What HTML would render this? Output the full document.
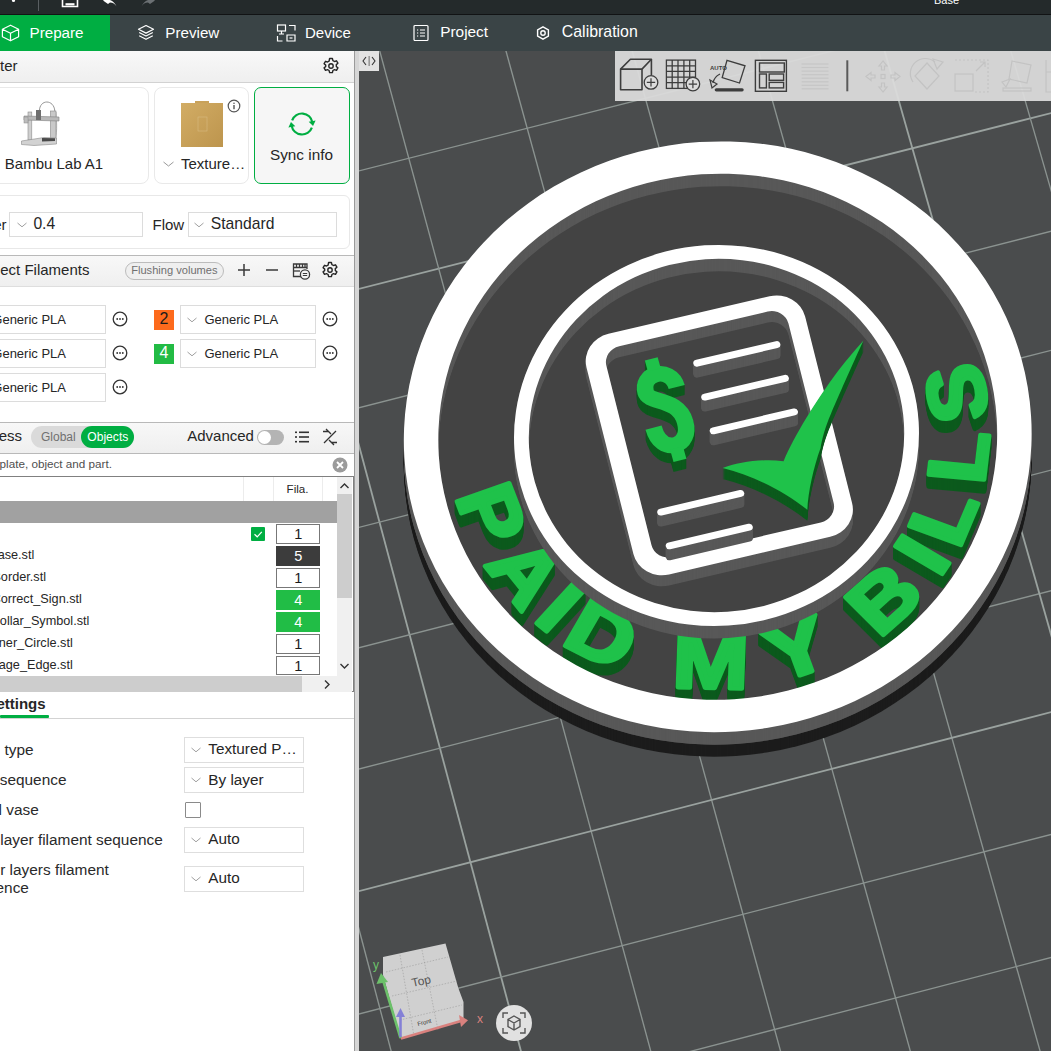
<!DOCTYPE html><html><head><meta charset="utf-8"><style>
html,body{margin:0;padding:0;}
body{width:1051px;height:1051px;overflow:hidden;position:relative;background:#fff;font-family:"Liberation Sans",sans-serif;}
.t{position:absolute;white-space:nowrap;line-height:1;}
.r{position:absolute;box-sizing:border-box;}
</style></head><body><svg style="position:absolute;left:0;top:0" width="1051" height="1051" viewBox="0 0 1051 1051">
<defs><clipPath id="vpc"><rect x="359" y="51" width="692" height="1000"/></clipPath></defs>
<g clip-path="url(#vpc)">
<rect x="359" y="51" width="692" height="1000" fill="#4a4c4d"/>
<line x1="-388.46" y1="8.64" x2="40.15" y2="1725.31" stroke="#9aa29f" stroke-width="1.8"/>
<line x1="-297.36" y1="-129.73" x2="1452.35" y2="-566.68" stroke="#9aa29f" stroke-width="1.8"/>
<line x1="-269.84" y1="-21.09" x2="164.10" y2="1692.58" stroke="#8b9390" stroke-width="1.35"/>
<line x1="-269.84" y1="-21.09" x2="1484.81" y2="-460.77" stroke="#8b9390" stroke-width="1.35"/>
<line x1="-151.43" y1="-50.76" x2="287.83" y2="1659.90" stroke="#8b9390" stroke-width="1.35"/>
<line x1="-242.16" y1="88.23" x2="1517.47" y2="-354.21" stroke="#8b9390" stroke-width="1.35"/>
<line x1="-33.23" y1="-80.38" x2="411.33" y2="1627.29" stroke="#8b9390" stroke-width="1.35"/>
<line x1="-214.31" y1="198.22" x2="1550.33" y2="-247.01" stroke="#8b9390" stroke-width="1.35"/>
<line x1="84.76" y1="-109.94" x2="534.61" y2="1594.73" stroke="#8b9390" stroke-width="1.35"/>
<line x1="-186.28" y1="308.89" x2="1583.39" y2="-139.14" stroke="#8b9390" stroke-width="1.35"/>
<line x1="202.55" y1="-139.46" x2="657.65" y2="1562.24" stroke="#9aa29f" stroke-width="1.8"/>
<line x1="-158.08" y1="420.25" x2="1616.65" y2="-30.62" stroke="#9aa29f" stroke-width="1.8"/>
<line x1="320.14" y1="-168.92" x2="780.48" y2="1529.80" stroke="#8b9390" stroke-width="1.35"/>
<line x1="-129.71" y1="532.31" x2="1650.12" y2="78.57" stroke="#8b9390" stroke-width="1.35"/>
<line x1="437.52" y1="-198.34" x2="903.08" y2="1497.43" stroke="#8b9390" stroke-width="1.35"/>
<line x1="-101.15" y1="645.07" x2="1683.80" y2="188.44" stroke="#8b9390" stroke-width="1.35"/>
<line x1="554.69" y1="-227.70" x2="1025.46" y2="1465.11" stroke="#8b9390" stroke-width="1.35"/>
<line x1="-72.42" y1="758.53" x2="1717.68" y2="298.99" stroke="#8b9390" stroke-width="1.35"/>
<line x1="671.67" y1="-257.01" x2="1147.61" y2="1432.85" stroke="#8b9390" stroke-width="1.35"/>
<line x1="-43.51" y1="872.71" x2="1751.77" y2="410.23" stroke="#8b9390" stroke-width="1.35"/>
<line x1="788.43" y1="-286.27" x2="1269.54" y2="1400.65" stroke="#9aa29f" stroke-width="1.8"/>
<line x1="-14.41" y1="987.62" x2="1786.08" y2="522.16" stroke="#9aa29f" stroke-width="1.8"/>
<line x1="905.00" y1="-315.48" x2="1391.25" y2="1368.51" stroke="#8b9390" stroke-width="1.35"/>
<line x1="14.87" y1="1103.25" x2="1820.60" y2="634.79" stroke="#8b9390" stroke-width="1.35"/>
<line x1="1021.37" y1="-344.64" x2="1512.74" y2="1336.42" stroke="#8b9390" stroke-width="1.35"/>
<line x1="44.34" y1="1219.61" x2="1855.34" y2="748.12" stroke="#8b9390" stroke-width="1.35"/>
<line x1="1137.53" y1="-373.75" x2="1634.01" y2="1304.40" stroke="#8b9390" stroke-width="1.35"/>
<line x1="73.99" y1="1336.72" x2="1890.29" y2="862.17" stroke="#8b9390" stroke-width="1.35"/>
<line x1="1253.49" y1="-402.81" x2="1755.06" y2="1272.43" stroke="#8b9390" stroke-width="1.35"/>
<line x1="103.84" y1="1454.58" x2="1925.47" y2="976.94" stroke="#8b9390" stroke-width="1.35"/>
<line x1="1369.25" y1="-431.81" x2="1875.88" y2="1240.52" stroke="#9aa29f" stroke-width="1.8"/>
<line x1="133.87" y1="1573.20" x2="1960.87" y2="1092.44" stroke="#9aa29f" stroke-width="1.8"/>
<g transform="translate(-1,2.5)"><g transform="translate(0,24.50)"><g transform="matrix(1.19121,-0.30480,0.31019,1.11767,718.725,434.294)"><circle cx="0" cy="0" r="255" fill="#1c1c1c"/></g></g>
<g transform="translate(0,23.50)"><g transform="matrix(1.19121,-0.30480,0.31019,1.11767,718.725,434.294)"><circle cx="0" cy="0" r="255" fill="#1c1c1c"/></g></g>
<g transform="translate(0,22.50)"><g transform="matrix(1.19121,-0.30480,0.31019,1.11767,718.725,434.294)"><circle cx="0" cy="0" r="255" fill="#1c1c1c"/></g></g>
<g transform="translate(0,21.50)"><g transform="matrix(1.19121,-0.30480,0.31019,1.11767,718.725,434.294)"><circle cx="0" cy="0" r="255" fill="#1c1c1c"/></g></g>
<g transform="translate(0,20.50)"><g transform="matrix(1.19121,-0.30480,0.31019,1.11767,718.725,434.294)"><circle cx="0" cy="0" r="255" fill="#1c1c1c"/></g></g>
<g transform="translate(0,19.50)"><g transform="matrix(1.19121,-0.30480,0.31019,1.11767,718.725,434.294)"><circle cx="0" cy="0" r="255" fill="#1c1c1c"/></g></g>
<g transform="translate(0,18.50)"><g transform="matrix(1.19121,-0.30480,0.31019,1.11767,718.725,434.294)"><circle cx="0" cy="0" r="255" fill="#1c1c1c"/></g></g>
<g transform="translate(0,17.50)"><g transform="matrix(1.19121,-0.30480,0.31019,1.11767,718.725,434.294)"><circle cx="0" cy="0" r="255" fill="#1c1c1c"/></g></g>
<g transform="translate(0,16.50)"><g transform="matrix(1.19121,-0.30480,0.31019,1.11767,718.725,434.294)"><circle cx="0" cy="0" r="255" fill="#1c1c1c"/></g></g>
<g transform="translate(0,15.50)"><g transform="matrix(1.19121,-0.30480,0.31019,1.11767,718.725,434.294)"><circle cx="0" cy="0" r="255" fill="#1c1c1c"/></g></g>
<g transform="translate(0,14.50)"><g transform="matrix(1.19121,-0.30480,0.31019,1.11767,718.725,434.294)"><circle cx="0" cy="0" r="255" fill="#1c1c1c"/></g></g>
<g transform="translate(0,13.50)"><g transform="matrix(1.19121,-0.30480,0.31019,1.11767,718.725,434.294)"><circle cx="0" cy="0" r="255" fill="#1c1c1c"/></g></g>
<g transform="translate(0,12.50)"><g transform="matrix(1.19121,-0.30480,0.31019,1.11767,718.725,434.294)"><circle cx="0" cy="0" r="255" fill="#434343"/></g></g></g>
<g transform="translate(0,12.00)"><g transform="matrix(1.19121,-0.30480,0.31019,1.11767,718.725,434.294)"><g fill="#0c5a1d" stroke="#0c5a1d" stroke-width="3.5" stroke-linejoin="round"><text transform="translate(-218.10,19.85) rotate(84.80) scale(1.120,1)" font-family="Liberation Sans" font-weight="bold" font-size="66" text-anchor="middle">P</text><text transform="translate(-202.62,83.10) rotate(67.70) scale(1.120,1)" font-family="Liberation Sans" font-weight="bold" font-size="66" text-anchor="middle">A</text><text transform="translate(-180.92,123.41) rotate(55.70) scale(1.120,1)" font-family="Liberation Sans" font-weight="bold" font-size="66" text-anchor="middle">I</text><text transform="translate(-150.75,158.86) rotate(43.50) scale(1.120,1)" font-family="Liberation Sans" font-weight="bold" font-size="66" text-anchor="middle">D</text><text transform="translate(-62.20,209.98) rotate(16.50) scale(1.120,1)" font-family="Liberation Sans" font-weight="bold" font-size="66" text-anchor="middle">M</text><text transform="translate(16.42,218.38) rotate(-4.30) scale(1.120,1)" font-family="Liberation Sans" font-weight="bold" font-size="66" text-anchor="middle">Y</text><text transform="translate(104.50,192.46) rotate(-28.50) scale(1.120,1)" font-family="Liberation Sans" font-weight="bold" font-size="66" text-anchor="middle">B</text><text transform="translate(148.80,160.69) rotate(-42.80) scale(1.120,1)" font-family="Liberation Sans" font-weight="bold" font-size="66" text-anchor="middle">I</text><text transform="translate(176.27,129.96) rotate(-53.60) scale(1.120,1)" font-family="Liberation Sans" font-weight="bold" font-size="66" text-anchor="middle">L</text><text transform="translate(204.59,78.13) rotate(-69.10) scale(1.120,1)" font-family="Liberation Sans" font-weight="bold" font-size="66" text-anchor="middle">L</text><text transform="translate(218.20,18.71) rotate(-85.10) scale(1.120,1)" font-family="Liberation Sans" font-weight="bold" font-size="66" text-anchor="middle">S</text></g></g></g>
<g transform="translate(0,11.00)"><g transform="matrix(1.19121,-0.30480,0.31019,1.11767,718.725,434.294)"><g fill="#0c5a1d" stroke="#0c5a1d" stroke-width="3.5" stroke-linejoin="round"><text transform="translate(-218.10,19.85) rotate(84.80) scale(1.120,1)" font-family="Liberation Sans" font-weight="bold" font-size="66" text-anchor="middle">P</text><text transform="translate(-202.62,83.10) rotate(67.70) scale(1.120,1)" font-family="Liberation Sans" font-weight="bold" font-size="66" text-anchor="middle">A</text><text transform="translate(-180.92,123.41) rotate(55.70) scale(1.120,1)" font-family="Liberation Sans" font-weight="bold" font-size="66" text-anchor="middle">I</text><text transform="translate(-150.75,158.86) rotate(43.50) scale(1.120,1)" font-family="Liberation Sans" font-weight="bold" font-size="66" text-anchor="middle">D</text><text transform="translate(-62.20,209.98) rotate(16.50) scale(1.120,1)" font-family="Liberation Sans" font-weight="bold" font-size="66" text-anchor="middle">M</text><text transform="translate(16.42,218.38) rotate(-4.30) scale(1.120,1)" font-family="Liberation Sans" font-weight="bold" font-size="66" text-anchor="middle">Y</text><text transform="translate(104.50,192.46) rotate(-28.50) scale(1.120,1)" font-family="Liberation Sans" font-weight="bold" font-size="66" text-anchor="middle">B</text><text transform="translate(148.80,160.69) rotate(-42.80) scale(1.120,1)" font-family="Liberation Sans" font-weight="bold" font-size="66" text-anchor="middle">I</text><text transform="translate(176.27,129.96) rotate(-53.60) scale(1.120,1)" font-family="Liberation Sans" font-weight="bold" font-size="66" text-anchor="middle">L</text><text transform="translate(204.59,78.13) rotate(-69.10) scale(1.120,1)" font-family="Liberation Sans" font-weight="bold" font-size="66" text-anchor="middle">L</text><text transform="translate(218.20,18.71) rotate(-85.10) scale(1.120,1)" font-family="Liberation Sans" font-weight="bold" font-size="66" text-anchor="middle">S</text></g></g></g>
<g transform="translate(0,10.00)"><g transform="matrix(1.19121,-0.30480,0.31019,1.11767,718.725,434.294)"><g fill="#0c5a1d" stroke="#0c5a1d" stroke-width="3.5" stroke-linejoin="round"><text transform="translate(-218.10,19.85) rotate(84.80) scale(1.120,1)" font-family="Liberation Sans" font-weight="bold" font-size="66" text-anchor="middle">P</text><text transform="translate(-202.62,83.10) rotate(67.70) scale(1.120,1)" font-family="Liberation Sans" font-weight="bold" font-size="66" text-anchor="middle">A</text><text transform="translate(-180.92,123.41) rotate(55.70) scale(1.120,1)" font-family="Liberation Sans" font-weight="bold" font-size="66" text-anchor="middle">I</text><text transform="translate(-150.75,158.86) rotate(43.50) scale(1.120,1)" font-family="Liberation Sans" font-weight="bold" font-size="66" text-anchor="middle">D</text><text transform="translate(-62.20,209.98) rotate(16.50) scale(1.120,1)" font-family="Liberation Sans" font-weight="bold" font-size="66" text-anchor="middle">M</text><text transform="translate(16.42,218.38) rotate(-4.30) scale(1.120,1)" font-family="Liberation Sans" font-weight="bold" font-size="66" text-anchor="middle">Y</text><text transform="translate(104.50,192.46) rotate(-28.50) scale(1.120,1)" font-family="Liberation Sans" font-weight="bold" font-size="66" text-anchor="middle">B</text><text transform="translate(148.80,160.69) rotate(-42.80) scale(1.120,1)" font-family="Liberation Sans" font-weight="bold" font-size="66" text-anchor="middle">I</text><text transform="translate(176.27,129.96) rotate(-53.60) scale(1.120,1)" font-family="Liberation Sans" font-weight="bold" font-size="66" text-anchor="middle">L</text><text transform="translate(204.59,78.13) rotate(-69.10) scale(1.120,1)" font-family="Liberation Sans" font-weight="bold" font-size="66" text-anchor="middle">L</text><text transform="translate(218.20,18.71) rotate(-85.10) scale(1.120,1)" font-family="Liberation Sans" font-weight="bold" font-size="66" text-anchor="middle">S</text></g></g></g>
<g transform="translate(0,9.00)"><g transform="matrix(1.19121,-0.30480,0.31019,1.11767,718.725,434.294)"><g fill="#0c5a1d" stroke="#0c5a1d" stroke-width="3.5" stroke-linejoin="round"><text transform="translate(-218.10,19.85) rotate(84.80) scale(1.120,1)" font-family="Liberation Sans" font-weight="bold" font-size="66" text-anchor="middle">P</text><text transform="translate(-202.62,83.10) rotate(67.70) scale(1.120,1)" font-family="Liberation Sans" font-weight="bold" font-size="66" text-anchor="middle">A</text><text transform="translate(-180.92,123.41) rotate(55.70) scale(1.120,1)" font-family="Liberation Sans" font-weight="bold" font-size="66" text-anchor="middle">I</text><text transform="translate(-150.75,158.86) rotate(43.50) scale(1.120,1)" font-family="Liberation Sans" font-weight="bold" font-size="66" text-anchor="middle">D</text><text transform="translate(-62.20,209.98) rotate(16.50) scale(1.120,1)" font-family="Liberation Sans" font-weight="bold" font-size="66" text-anchor="middle">M</text><text transform="translate(16.42,218.38) rotate(-4.30) scale(1.120,1)" font-family="Liberation Sans" font-weight="bold" font-size="66" text-anchor="middle">Y</text><text transform="translate(104.50,192.46) rotate(-28.50) scale(1.120,1)" font-family="Liberation Sans" font-weight="bold" font-size="66" text-anchor="middle">B</text><text transform="translate(148.80,160.69) rotate(-42.80) scale(1.120,1)" font-family="Liberation Sans" font-weight="bold" font-size="66" text-anchor="middle">I</text><text transform="translate(176.27,129.96) rotate(-53.60) scale(1.120,1)" font-family="Liberation Sans" font-weight="bold" font-size="66" text-anchor="middle">L</text><text transform="translate(204.59,78.13) rotate(-69.10) scale(1.120,1)" font-family="Liberation Sans" font-weight="bold" font-size="66" text-anchor="middle">L</text><text transform="translate(218.20,18.71) rotate(-85.10) scale(1.120,1)" font-family="Liberation Sans" font-weight="bold" font-size="66" text-anchor="middle">S</text></g></g></g>
<g transform="translate(0,8.00)"><g transform="matrix(1.19121,-0.30480,0.31019,1.11767,718.725,434.294)"><g fill="#0c5a1d" stroke="#0c5a1d" stroke-width="3.5" stroke-linejoin="round"><text transform="translate(-218.10,19.85) rotate(84.80) scale(1.120,1)" font-family="Liberation Sans" font-weight="bold" font-size="66" text-anchor="middle">P</text><text transform="translate(-202.62,83.10) rotate(67.70) scale(1.120,1)" font-family="Liberation Sans" font-weight="bold" font-size="66" text-anchor="middle">A</text><text transform="translate(-180.92,123.41) rotate(55.70) scale(1.120,1)" font-family="Liberation Sans" font-weight="bold" font-size="66" text-anchor="middle">I</text><text transform="translate(-150.75,158.86) rotate(43.50) scale(1.120,1)" font-family="Liberation Sans" font-weight="bold" font-size="66" text-anchor="middle">D</text><text transform="translate(-62.20,209.98) rotate(16.50) scale(1.120,1)" font-family="Liberation Sans" font-weight="bold" font-size="66" text-anchor="middle">M</text><text transform="translate(16.42,218.38) rotate(-4.30) scale(1.120,1)" font-family="Liberation Sans" font-weight="bold" font-size="66" text-anchor="middle">Y</text><text transform="translate(104.50,192.46) rotate(-28.50) scale(1.120,1)" font-family="Liberation Sans" font-weight="bold" font-size="66" text-anchor="middle">B</text><text transform="translate(148.80,160.69) rotate(-42.80) scale(1.120,1)" font-family="Liberation Sans" font-weight="bold" font-size="66" text-anchor="middle">I</text><text transform="translate(176.27,129.96) rotate(-53.60) scale(1.120,1)" font-family="Liberation Sans" font-weight="bold" font-size="66" text-anchor="middle">L</text><text transform="translate(204.59,78.13) rotate(-69.10) scale(1.120,1)" font-family="Liberation Sans" font-weight="bold" font-size="66" text-anchor="middle">L</text><text transform="translate(218.20,18.71) rotate(-85.10) scale(1.120,1)" font-family="Liberation Sans" font-weight="bold" font-size="66" text-anchor="middle">S</text></g></g></g>
<g transform="translate(0,7.00)"><g transform="matrix(1.19121,-0.30480,0.31019,1.11767,718.725,434.294)"><g fill="#0c5a1d" stroke="#0c5a1d" stroke-width="3.5" stroke-linejoin="round"><text transform="translate(-218.10,19.85) rotate(84.80) scale(1.120,1)" font-family="Liberation Sans" font-weight="bold" font-size="66" text-anchor="middle">P</text><text transform="translate(-202.62,83.10) rotate(67.70) scale(1.120,1)" font-family="Liberation Sans" font-weight="bold" font-size="66" text-anchor="middle">A</text><text transform="translate(-180.92,123.41) rotate(55.70) scale(1.120,1)" font-family="Liberation Sans" font-weight="bold" font-size="66" text-anchor="middle">I</text><text transform="translate(-150.75,158.86) rotate(43.50) scale(1.120,1)" font-family="Liberation Sans" font-weight="bold" font-size="66" text-anchor="middle">D</text><text transform="translate(-62.20,209.98) rotate(16.50) scale(1.120,1)" font-family="Liberation Sans" font-weight="bold" font-size="66" text-anchor="middle">M</text><text transform="translate(16.42,218.38) rotate(-4.30) scale(1.120,1)" font-family="Liberation Sans" font-weight="bold" font-size="66" text-anchor="middle">Y</text><text transform="translate(104.50,192.46) rotate(-28.50) scale(1.120,1)" font-family="Liberation Sans" font-weight="bold" font-size="66" text-anchor="middle">B</text><text transform="translate(148.80,160.69) rotate(-42.80) scale(1.120,1)" font-family="Liberation Sans" font-weight="bold" font-size="66" text-anchor="middle">I</text><text transform="translate(176.27,129.96) rotate(-53.60) scale(1.120,1)" font-family="Liberation Sans" font-weight="bold" font-size="66" text-anchor="middle">L</text><text transform="translate(204.59,78.13) rotate(-69.10) scale(1.120,1)" font-family="Liberation Sans" font-weight="bold" font-size="66" text-anchor="middle">L</text><text transform="translate(218.20,18.71) rotate(-85.10) scale(1.120,1)" font-family="Liberation Sans" font-weight="bold" font-size="66" text-anchor="middle">S</text></g></g></g>
<g transform="translate(0,6.00)"><g transform="matrix(1.19121,-0.30480,0.31019,1.11767,718.725,434.294)"><g fill="#0c5a1d" stroke="#0c5a1d" stroke-width="3.5" stroke-linejoin="round"><text transform="translate(-218.10,19.85) rotate(84.80) scale(1.120,1)" font-family="Liberation Sans" font-weight="bold" font-size="66" text-anchor="middle">P</text><text transform="translate(-202.62,83.10) rotate(67.70) scale(1.120,1)" font-family="Liberation Sans" font-weight="bold" font-size="66" text-anchor="middle">A</text><text transform="translate(-180.92,123.41) rotate(55.70) scale(1.120,1)" font-family="Liberation Sans" font-weight="bold" font-size="66" text-anchor="middle">I</text><text transform="translate(-150.75,158.86) rotate(43.50) scale(1.120,1)" font-family="Liberation Sans" font-weight="bold" font-size="66" text-anchor="middle">D</text><text transform="translate(-62.20,209.98) rotate(16.50) scale(1.120,1)" font-family="Liberation Sans" font-weight="bold" font-size="66" text-anchor="middle">M</text><text transform="translate(16.42,218.38) rotate(-4.30) scale(1.120,1)" font-family="Liberation Sans" font-weight="bold" font-size="66" text-anchor="middle">Y</text><text transform="translate(104.50,192.46) rotate(-28.50) scale(1.120,1)" font-family="Liberation Sans" font-weight="bold" font-size="66" text-anchor="middle">B</text><text transform="translate(148.80,160.69) rotate(-42.80) scale(1.120,1)" font-family="Liberation Sans" font-weight="bold" font-size="66" text-anchor="middle">I</text><text transform="translate(176.27,129.96) rotate(-53.60) scale(1.120,1)" font-family="Liberation Sans" font-weight="bold" font-size="66" text-anchor="middle">L</text><text transform="translate(204.59,78.13) rotate(-69.10) scale(1.120,1)" font-family="Liberation Sans" font-weight="bold" font-size="66" text-anchor="middle">L</text><text transform="translate(218.20,18.71) rotate(-85.10) scale(1.120,1)" font-family="Liberation Sans" font-weight="bold" font-size="66" text-anchor="middle">S</text></g></g></g>
<g transform="translate(0,5.00)"><g transform="matrix(1.19121,-0.30480,0.31019,1.11767,718.725,434.294)"><g fill="#0c5a1d" stroke="#0c5a1d" stroke-width="3.5" stroke-linejoin="round"><text transform="translate(-218.10,19.85) rotate(84.80) scale(1.120,1)" font-family="Liberation Sans" font-weight="bold" font-size="66" text-anchor="middle">P</text><text transform="translate(-202.62,83.10) rotate(67.70) scale(1.120,1)" font-family="Liberation Sans" font-weight="bold" font-size="66" text-anchor="middle">A</text><text transform="translate(-180.92,123.41) rotate(55.70) scale(1.120,1)" font-family="Liberation Sans" font-weight="bold" font-size="66" text-anchor="middle">I</text><text transform="translate(-150.75,158.86) rotate(43.50) scale(1.120,1)" font-family="Liberation Sans" font-weight="bold" font-size="66" text-anchor="middle">D</text><text transform="translate(-62.20,209.98) rotate(16.50) scale(1.120,1)" font-family="Liberation Sans" font-weight="bold" font-size="66" text-anchor="middle">M</text><text transform="translate(16.42,218.38) rotate(-4.30) scale(1.120,1)" font-family="Liberation Sans" font-weight="bold" font-size="66" text-anchor="middle">Y</text><text transform="translate(104.50,192.46) rotate(-28.50) scale(1.120,1)" font-family="Liberation Sans" font-weight="bold" font-size="66" text-anchor="middle">B</text><text transform="translate(148.80,160.69) rotate(-42.80) scale(1.120,1)" font-family="Liberation Sans" font-weight="bold" font-size="66" text-anchor="middle">I</text><text transform="translate(176.27,129.96) rotate(-53.60) scale(1.120,1)" font-family="Liberation Sans" font-weight="bold" font-size="66" text-anchor="middle">L</text><text transform="translate(204.59,78.13) rotate(-69.10) scale(1.120,1)" font-family="Liberation Sans" font-weight="bold" font-size="66" text-anchor="middle">L</text><text transform="translate(218.20,18.71) rotate(-85.10) scale(1.120,1)" font-family="Liberation Sans" font-weight="bold" font-size="66" text-anchor="middle">S</text></g></g></g>
<g transform="translate(0,4.00)"><g transform="matrix(1.19121,-0.30480,0.31019,1.11767,718.725,434.294)"><g fill="#0c5a1d" stroke="#0c5a1d" stroke-width="3.5" stroke-linejoin="round"><text transform="translate(-218.10,19.85) rotate(84.80) scale(1.120,1)" font-family="Liberation Sans" font-weight="bold" font-size="66" text-anchor="middle">P</text><text transform="translate(-202.62,83.10) rotate(67.70) scale(1.120,1)" font-family="Liberation Sans" font-weight="bold" font-size="66" text-anchor="middle">A</text><text transform="translate(-180.92,123.41) rotate(55.70) scale(1.120,1)" font-family="Liberation Sans" font-weight="bold" font-size="66" text-anchor="middle">I</text><text transform="translate(-150.75,158.86) rotate(43.50) scale(1.120,1)" font-family="Liberation Sans" font-weight="bold" font-size="66" text-anchor="middle">D</text><text transform="translate(-62.20,209.98) rotate(16.50) scale(1.120,1)" font-family="Liberation Sans" font-weight="bold" font-size="66" text-anchor="middle">M</text><text transform="translate(16.42,218.38) rotate(-4.30) scale(1.120,1)" font-family="Liberation Sans" font-weight="bold" font-size="66" text-anchor="middle">Y</text><text transform="translate(104.50,192.46) rotate(-28.50) scale(1.120,1)" font-family="Liberation Sans" font-weight="bold" font-size="66" text-anchor="middle">B</text><text transform="translate(148.80,160.69) rotate(-42.80) scale(1.120,1)" font-family="Liberation Sans" font-weight="bold" font-size="66" text-anchor="middle">I</text><text transform="translate(176.27,129.96) rotate(-53.60) scale(1.120,1)" font-family="Liberation Sans" font-weight="bold" font-size="66" text-anchor="middle">L</text><text transform="translate(204.59,78.13) rotate(-69.10) scale(1.120,1)" font-family="Liberation Sans" font-weight="bold" font-size="66" text-anchor="middle">L</text><text transform="translate(218.20,18.71) rotate(-85.10) scale(1.120,1)" font-family="Liberation Sans" font-weight="bold" font-size="66" text-anchor="middle">S</text></g></g></g>
<g transform="translate(0,3.00)"><g transform="matrix(1.19121,-0.30480,0.31019,1.11767,718.725,434.294)"><g fill="#0c5a1d" stroke="#0c5a1d" stroke-width="3.5" stroke-linejoin="round"><text transform="translate(-218.10,19.85) rotate(84.80) scale(1.120,1)" font-family="Liberation Sans" font-weight="bold" font-size="66" text-anchor="middle">P</text><text transform="translate(-202.62,83.10) rotate(67.70) scale(1.120,1)" font-family="Liberation Sans" font-weight="bold" font-size="66" text-anchor="middle">A</text><text transform="translate(-180.92,123.41) rotate(55.70) scale(1.120,1)" font-family="Liberation Sans" font-weight="bold" font-size="66" text-anchor="middle">I</text><text transform="translate(-150.75,158.86) rotate(43.50) scale(1.120,1)" font-family="Liberation Sans" font-weight="bold" font-size="66" text-anchor="middle">D</text><text transform="translate(-62.20,209.98) rotate(16.50) scale(1.120,1)" font-family="Liberation Sans" font-weight="bold" font-size="66" text-anchor="middle">M</text><text transform="translate(16.42,218.38) rotate(-4.30) scale(1.120,1)" font-family="Liberation Sans" font-weight="bold" font-size="66" text-anchor="middle">Y</text><text transform="translate(104.50,192.46) rotate(-28.50) scale(1.120,1)" font-family="Liberation Sans" font-weight="bold" font-size="66" text-anchor="middle">B</text><text transform="translate(148.80,160.69) rotate(-42.80) scale(1.120,1)" font-family="Liberation Sans" font-weight="bold" font-size="66" text-anchor="middle">I</text><text transform="translate(176.27,129.96) rotate(-53.60) scale(1.120,1)" font-family="Liberation Sans" font-weight="bold" font-size="66" text-anchor="middle">L</text><text transform="translate(204.59,78.13) rotate(-69.10) scale(1.120,1)" font-family="Liberation Sans" font-weight="bold" font-size="66" text-anchor="middle">L</text><text transform="translate(218.20,18.71) rotate(-85.10) scale(1.120,1)" font-family="Liberation Sans" font-weight="bold" font-size="66" text-anchor="middle">S</text></g></g></g>
<g transform="translate(0,2.00)"><g transform="matrix(1.19121,-0.30480,0.31019,1.11767,718.725,434.294)"><g fill="#0c5a1d" stroke="#0c5a1d" stroke-width="3.5" stroke-linejoin="round"><text transform="translate(-218.10,19.85) rotate(84.80) scale(1.120,1)" font-family="Liberation Sans" font-weight="bold" font-size="66" text-anchor="middle">P</text><text transform="translate(-202.62,83.10) rotate(67.70) scale(1.120,1)" font-family="Liberation Sans" font-weight="bold" font-size="66" text-anchor="middle">A</text><text transform="translate(-180.92,123.41) rotate(55.70) scale(1.120,1)" font-family="Liberation Sans" font-weight="bold" font-size="66" text-anchor="middle">I</text><text transform="translate(-150.75,158.86) rotate(43.50) scale(1.120,1)" font-family="Liberation Sans" font-weight="bold" font-size="66" text-anchor="middle">D</text><text transform="translate(-62.20,209.98) rotate(16.50) scale(1.120,1)" font-family="Liberation Sans" font-weight="bold" font-size="66" text-anchor="middle">M</text><text transform="translate(16.42,218.38) rotate(-4.30) scale(1.120,1)" font-family="Liberation Sans" font-weight="bold" font-size="66" text-anchor="middle">Y</text><text transform="translate(104.50,192.46) rotate(-28.50) scale(1.120,1)" font-family="Liberation Sans" font-weight="bold" font-size="66" text-anchor="middle">B</text><text transform="translate(148.80,160.69) rotate(-42.80) scale(1.120,1)" font-family="Liberation Sans" font-weight="bold" font-size="66" text-anchor="middle">I</text><text transform="translate(176.27,129.96) rotate(-53.60) scale(1.120,1)" font-family="Liberation Sans" font-weight="bold" font-size="66" text-anchor="middle">L</text><text transform="translate(204.59,78.13) rotate(-69.10) scale(1.120,1)" font-family="Liberation Sans" font-weight="bold" font-size="66" text-anchor="middle">L</text><text transform="translate(218.20,18.71) rotate(-85.10) scale(1.120,1)" font-family="Liberation Sans" font-weight="bold" font-size="66" text-anchor="middle">S</text></g></g></g>
<g transform="translate(0,1.00)"><g transform="matrix(1.19121,-0.30480,0.31019,1.11767,718.725,434.294)"><g fill="#0c5a1d" stroke="#0c5a1d" stroke-width="3.5" stroke-linejoin="round"><text transform="translate(-218.10,19.85) rotate(84.80) scale(1.120,1)" font-family="Liberation Sans" font-weight="bold" font-size="66" text-anchor="middle">P</text><text transform="translate(-202.62,83.10) rotate(67.70) scale(1.120,1)" font-family="Liberation Sans" font-weight="bold" font-size="66" text-anchor="middle">A</text><text transform="translate(-180.92,123.41) rotate(55.70) scale(1.120,1)" font-family="Liberation Sans" font-weight="bold" font-size="66" text-anchor="middle">I</text><text transform="translate(-150.75,158.86) rotate(43.50) scale(1.120,1)" font-family="Liberation Sans" font-weight="bold" font-size="66" text-anchor="middle">D</text><text transform="translate(-62.20,209.98) rotate(16.50) scale(1.120,1)" font-family="Liberation Sans" font-weight="bold" font-size="66" text-anchor="middle">M</text><text transform="translate(16.42,218.38) rotate(-4.30) scale(1.120,1)" font-family="Liberation Sans" font-weight="bold" font-size="66" text-anchor="middle">Y</text><text transform="translate(104.50,192.46) rotate(-28.50) scale(1.120,1)" font-family="Liberation Sans" font-weight="bold" font-size="66" text-anchor="middle">B</text><text transform="translate(148.80,160.69) rotate(-42.80) scale(1.120,1)" font-family="Liberation Sans" font-weight="bold" font-size="66" text-anchor="middle">I</text><text transform="translate(176.27,129.96) rotate(-53.60) scale(1.120,1)" font-family="Liberation Sans" font-weight="bold" font-size="66" text-anchor="middle">L</text><text transform="translate(204.59,78.13) rotate(-69.10) scale(1.120,1)" font-family="Liberation Sans" font-weight="bold" font-size="66" text-anchor="middle">L</text><text transform="translate(218.20,18.71) rotate(-85.10) scale(1.120,1)" font-family="Liberation Sans" font-weight="bold" font-size="66" text-anchor="middle">S</text></g></g></g>
<g transform="translate(0,0.00)"><g transform="matrix(1.19121,-0.30480,0.31019,1.11767,718.725,434.294)"><g fill="#1fc24a" stroke="#1fc24a" stroke-width="3.5" stroke-linejoin="round"><text transform="translate(-218.10,19.85) rotate(84.80) scale(1.120,1)" font-family="Liberation Sans" font-weight="bold" font-size="66" text-anchor="middle">P</text><text transform="translate(-202.62,83.10) rotate(67.70) scale(1.120,1)" font-family="Liberation Sans" font-weight="bold" font-size="66" text-anchor="middle">A</text><text transform="translate(-180.92,123.41) rotate(55.70) scale(1.120,1)" font-family="Liberation Sans" font-weight="bold" font-size="66" text-anchor="middle">I</text><text transform="translate(-150.75,158.86) rotate(43.50) scale(1.120,1)" font-family="Liberation Sans" font-weight="bold" font-size="66" text-anchor="middle">D</text><text transform="translate(-62.20,209.98) rotate(16.50) scale(1.120,1)" font-family="Liberation Sans" font-weight="bold" font-size="66" text-anchor="middle">M</text><text transform="translate(16.42,218.38) rotate(-4.30) scale(1.120,1)" font-family="Liberation Sans" font-weight="bold" font-size="66" text-anchor="middle">Y</text><text transform="translate(104.50,192.46) rotate(-28.50) scale(1.120,1)" font-family="Liberation Sans" font-weight="bold" font-size="66" text-anchor="middle">B</text><text transform="translate(148.80,160.69) rotate(-42.80) scale(1.120,1)" font-family="Liberation Sans" font-weight="bold" font-size="66" text-anchor="middle">I</text><text transform="translate(176.27,129.96) rotate(-53.60) scale(1.120,1)" font-family="Liberation Sans" font-weight="bold" font-size="66" text-anchor="middle">L</text><text transform="translate(204.59,78.13) rotate(-69.10) scale(1.120,1)" font-family="Liberation Sans" font-weight="bold" font-size="66" text-anchor="middle">L</text><text transform="translate(218.20,18.71) rotate(-85.10) scale(1.120,1)" font-family="Liberation Sans" font-weight="bold" font-size="66" text-anchor="middle">S</text></g></g></g>
<g transform="translate(-1,2.5)"><g transform="translate(0,12.50)"><g transform="matrix(1.19121,-0.30480,0.31019,1.11767,718.725,434.294)"><path fill="#585858" fill-rule="evenodd" d="M-255 0 a255 255 0 1 0 510 0 a255 255 0 1 0 -510 0 Z M-227 0 a227 227 0 1 0 454 0 a227 227 0 1 0 -454 0 Z"/></g></g>
<g transform="translate(0,11.50)"><g transform="matrix(1.19121,-0.30480,0.31019,1.11767,718.725,434.294)"><path fill="#585858" fill-rule="evenodd" d="M-255 0 a255 255 0 1 0 510 0 a255 255 0 1 0 -510 0 Z M-227 0 a227 227 0 1 0 454 0 a227 227 0 1 0 -454 0 Z"/></g></g>
<g transform="translate(0,10.50)"><g transform="matrix(1.19121,-0.30480,0.31019,1.11767,718.725,434.294)"><path fill="#585858" fill-rule="evenodd" d="M-255 0 a255 255 0 1 0 510 0 a255 255 0 1 0 -510 0 Z M-227 0 a227 227 0 1 0 454 0 a227 227 0 1 0 -454 0 Z"/></g></g>
<g transform="translate(0,9.50)"><g transform="matrix(1.19121,-0.30480,0.31019,1.11767,718.725,434.294)"><path fill="#585858" fill-rule="evenodd" d="M-255 0 a255 255 0 1 0 510 0 a255 255 0 1 0 -510 0 Z M-227 0 a227 227 0 1 0 454 0 a227 227 0 1 0 -454 0 Z"/></g></g>
<g transform="translate(0,8.50)"><g transform="matrix(1.19121,-0.30480,0.31019,1.11767,718.725,434.294)"><path fill="#585858" fill-rule="evenodd" d="M-255 0 a255 255 0 1 0 510 0 a255 255 0 1 0 -510 0 Z M-227 0 a227 227 0 1 0 454 0 a227 227 0 1 0 -454 0 Z"/></g></g>
<g transform="translate(0,7.50)"><g transform="matrix(1.19121,-0.30480,0.31019,1.11767,718.725,434.294)"><path fill="#585858" fill-rule="evenodd" d="M-255 0 a255 255 0 1 0 510 0 a255 255 0 1 0 -510 0 Z M-227 0 a227 227 0 1 0 454 0 a227 227 0 1 0 -454 0 Z"/></g></g>
<g transform="translate(0,6.50)"><g transform="matrix(1.19121,-0.30480,0.31019,1.11767,718.725,434.294)"><path fill="#585858" fill-rule="evenodd" d="M-255 0 a255 255 0 1 0 510 0 a255 255 0 1 0 -510 0 Z M-227 0 a227 227 0 1 0 454 0 a227 227 0 1 0 -454 0 Z"/></g></g>
<g transform="translate(0,5.50)"><g transform="matrix(1.19121,-0.30480,0.31019,1.11767,718.725,434.294)"><path fill="#585858" fill-rule="evenodd" d="M-255 0 a255 255 0 1 0 510 0 a255 255 0 1 0 -510 0 Z M-227 0 a227 227 0 1 0 454 0 a227 227 0 1 0 -454 0 Z"/></g></g>
<g transform="translate(0,4.50)"><g transform="matrix(1.19121,-0.30480,0.31019,1.11767,718.725,434.294)"><path fill="#585858" fill-rule="evenodd" d="M-255 0 a255 255 0 1 0 510 0 a255 255 0 1 0 -510 0 Z M-227 0 a227 227 0 1 0 454 0 a227 227 0 1 0 -454 0 Z"/></g></g>
<g transform="translate(0,3.50)"><g transform="matrix(1.19121,-0.30480,0.31019,1.11767,718.725,434.294)"><path fill="#585858" fill-rule="evenodd" d="M-255 0 a255 255 0 1 0 510 0 a255 255 0 1 0 -510 0 Z M-227 0 a227 227 0 1 0 454 0 a227 227 0 1 0 -454 0 Z"/></g></g>
<g transform="translate(0,2.50)"><g transform="matrix(1.19121,-0.30480,0.31019,1.11767,718.725,434.294)"><path fill="#585858" fill-rule="evenodd" d="M-255 0 a255 255 0 1 0 510 0 a255 255 0 1 0 -510 0 Z M-227 0 a227 227 0 1 0 454 0 a227 227 0 1 0 -454 0 Z"/></g></g>
<g transform="translate(0,1.50)"><g transform="matrix(1.19121,-0.30480,0.31019,1.11767,718.725,434.294)"><path fill="#585858" fill-rule="evenodd" d="M-255 0 a255 255 0 1 0 510 0 a255 255 0 1 0 -510 0 Z M-227 0 a227 227 0 1 0 454 0 a227 227 0 1 0 -454 0 Z"/></g></g>
<g transform="translate(0,0.50)"><g transform="matrix(1.19121,-0.30480,0.31019,1.11767,718.725,434.294)"><path fill="#585858" fill-rule="evenodd" d="M-255 0 a255 255 0 1 0 510 0 a255 255 0 1 0 -510 0 Z M-227 0 a227 227 0 1 0 454 0 a227 227 0 1 0 -454 0 Z"/></g></g>
<g transform="translate(0,0.00)"><g transform="matrix(1.19121,-0.30480,0.31019,1.11767,718.725,434.294)"><path fill="#ffffff" fill-rule="evenodd" d="M-255 0 a255 255 0 1 0 510 0 a255 255 0 1 0 -510 0 Z M-227 0 a227 227 0 1 0 454 0 a227 227 0 1 0 -454 0 Z"/></g></g></g>
<g transform="translate(0,12.50)"><g transform="matrix(1.19121,-0.30480,0.31019,1.11767,718.725,434.294)"><path fill="#585858" fill-rule="evenodd" d="M-166.5 0.5 a164.5 164.5 0 1 0 329 0 a164.5 164.5 0 1 0 -329 0 Z M-154.5 0.5 a152.5 152.5 0 1 0 305 0 a152.5 152.5 0 1 0 -305 0 Z"/></g></g>
<g transform="translate(0,11.50)"><g transform="matrix(1.19121,-0.30480,0.31019,1.11767,718.725,434.294)"><path fill="#585858" fill-rule="evenodd" d="M-166.5 0.5 a164.5 164.5 0 1 0 329 0 a164.5 164.5 0 1 0 -329 0 Z M-154.5 0.5 a152.5 152.5 0 1 0 305 0 a152.5 152.5 0 1 0 -305 0 Z"/></g></g>
<g transform="translate(0,10.50)"><g transform="matrix(1.19121,-0.30480,0.31019,1.11767,718.725,434.294)"><path fill="#585858" fill-rule="evenodd" d="M-166.5 0.5 a164.5 164.5 0 1 0 329 0 a164.5 164.5 0 1 0 -329 0 Z M-154.5 0.5 a152.5 152.5 0 1 0 305 0 a152.5 152.5 0 1 0 -305 0 Z"/></g></g>
<g transform="translate(0,9.50)"><g transform="matrix(1.19121,-0.30480,0.31019,1.11767,718.725,434.294)"><path fill="#585858" fill-rule="evenodd" d="M-166.5 0.5 a164.5 164.5 0 1 0 329 0 a164.5 164.5 0 1 0 -329 0 Z M-154.5 0.5 a152.5 152.5 0 1 0 305 0 a152.5 152.5 0 1 0 -305 0 Z"/></g></g>
<g transform="translate(0,8.50)"><g transform="matrix(1.19121,-0.30480,0.31019,1.11767,718.725,434.294)"><path fill="#585858" fill-rule="evenodd" d="M-166.5 0.5 a164.5 164.5 0 1 0 329 0 a164.5 164.5 0 1 0 -329 0 Z M-154.5 0.5 a152.5 152.5 0 1 0 305 0 a152.5 152.5 0 1 0 -305 0 Z"/></g></g>
<g transform="translate(0,7.50)"><g transform="matrix(1.19121,-0.30480,0.31019,1.11767,718.725,434.294)"><path fill="#585858" fill-rule="evenodd" d="M-166.5 0.5 a164.5 164.5 0 1 0 329 0 a164.5 164.5 0 1 0 -329 0 Z M-154.5 0.5 a152.5 152.5 0 1 0 305 0 a152.5 152.5 0 1 0 -305 0 Z"/></g></g>
<g transform="translate(0,6.50)"><g transform="matrix(1.19121,-0.30480,0.31019,1.11767,718.725,434.294)"><path fill="#585858" fill-rule="evenodd" d="M-166.5 0.5 a164.5 164.5 0 1 0 329 0 a164.5 164.5 0 1 0 -329 0 Z M-154.5 0.5 a152.5 152.5 0 1 0 305 0 a152.5 152.5 0 1 0 -305 0 Z"/></g></g>
<g transform="translate(0,5.50)"><g transform="matrix(1.19121,-0.30480,0.31019,1.11767,718.725,434.294)"><path fill="#585858" fill-rule="evenodd" d="M-166.5 0.5 a164.5 164.5 0 1 0 329 0 a164.5 164.5 0 1 0 -329 0 Z M-154.5 0.5 a152.5 152.5 0 1 0 305 0 a152.5 152.5 0 1 0 -305 0 Z"/></g></g>
<g transform="translate(0,4.50)"><g transform="matrix(1.19121,-0.30480,0.31019,1.11767,718.725,434.294)"><path fill="#585858" fill-rule="evenodd" d="M-166.5 0.5 a164.5 164.5 0 1 0 329 0 a164.5 164.5 0 1 0 -329 0 Z M-154.5 0.5 a152.5 152.5 0 1 0 305 0 a152.5 152.5 0 1 0 -305 0 Z"/></g></g>
<g transform="translate(0,3.50)"><g transform="matrix(1.19121,-0.30480,0.31019,1.11767,718.725,434.294)"><path fill="#585858" fill-rule="evenodd" d="M-166.5 0.5 a164.5 164.5 0 1 0 329 0 a164.5 164.5 0 1 0 -329 0 Z M-154.5 0.5 a152.5 152.5 0 1 0 305 0 a152.5 152.5 0 1 0 -305 0 Z"/></g></g>
<g transform="translate(0,2.50)"><g transform="matrix(1.19121,-0.30480,0.31019,1.11767,718.725,434.294)"><path fill="#585858" fill-rule="evenodd" d="M-166.5 0.5 a164.5 164.5 0 1 0 329 0 a164.5 164.5 0 1 0 -329 0 Z M-154.5 0.5 a152.5 152.5 0 1 0 305 0 a152.5 152.5 0 1 0 -305 0 Z"/></g></g>
<g transform="translate(0,1.50)"><g transform="matrix(1.19121,-0.30480,0.31019,1.11767,718.725,434.294)"><path fill="#585858" fill-rule="evenodd" d="M-166.5 0.5 a164.5 164.5 0 1 0 329 0 a164.5 164.5 0 1 0 -329 0 Z M-154.5 0.5 a152.5 152.5 0 1 0 305 0 a152.5 152.5 0 1 0 -305 0 Z"/></g></g>
<g transform="translate(0,0.50)"><g transform="matrix(1.19121,-0.30480,0.31019,1.11767,718.725,434.294)"><path fill="#585858" fill-rule="evenodd" d="M-166.5 0.5 a164.5 164.5 0 1 0 329 0 a164.5 164.5 0 1 0 -329 0 Z M-154.5 0.5 a152.5 152.5 0 1 0 305 0 a152.5 152.5 0 1 0 -305 0 Z"/></g></g>
<g transform="translate(0,0.00)"><g transform="matrix(1.19121,-0.30480,0.31019,1.11767,718.725,434.294)"><path fill="#ffffff" fill-rule="evenodd" d="M-166.5 0.5 a164.5 164.5 0 1 0 329 0 a164.5 164.5 0 1 0 -329 0 Z M-154.5 0.5 a152.5 152.5 0 1 0 305 0 a152.5 152.5 0 1 0 -305 0 Z"/></g></g>
<g transform="translate(0,11.00)"><g transform="matrix(1.19121,-0.30480,0.31019,1.11767,718.725,434.294)"><g transform="rotate(1.3)"><path fill="#585858" fill-rule="evenodd" d="M-67 -106 H67.5 A24 24 0 0 1 91.5 -82 V84 A24 24 0 0 1 67.5 108 H-67 A24 24 0 0 1 -91 84 V-82 A24 24 0 0 1 -67 -106 Z M-61 -93.5 H63 A14 14 0 0 1 77 -79.5 V80 A14 14 0 0 1 63 94 H-61 A14 14 0 0 1 -75 80 V-79.5 A14 14 0 0 1 -61 -93.5 Z"/></g></g></g>
<g transform="translate(0,10.00)"><g transform="matrix(1.19121,-0.30480,0.31019,1.11767,718.725,434.294)"><g transform="rotate(1.3)"><path fill="#585858" fill-rule="evenodd" d="M-67 -106 H67.5 A24 24 0 0 1 91.5 -82 V84 A24 24 0 0 1 67.5 108 H-67 A24 24 0 0 1 -91 84 V-82 A24 24 0 0 1 -67 -106 Z M-61 -93.5 H63 A14 14 0 0 1 77 -79.5 V80 A14 14 0 0 1 63 94 H-61 A14 14 0 0 1 -75 80 V-79.5 A14 14 0 0 1 -61 -93.5 Z"/></g></g></g>
<g transform="translate(0,9.00)"><g transform="matrix(1.19121,-0.30480,0.31019,1.11767,718.725,434.294)"><g transform="rotate(1.3)"><path fill="#585858" fill-rule="evenodd" d="M-67 -106 H67.5 A24 24 0 0 1 91.5 -82 V84 A24 24 0 0 1 67.5 108 H-67 A24 24 0 0 1 -91 84 V-82 A24 24 0 0 1 -67 -106 Z M-61 -93.5 H63 A14 14 0 0 1 77 -79.5 V80 A14 14 0 0 1 63 94 H-61 A14 14 0 0 1 -75 80 V-79.5 A14 14 0 0 1 -61 -93.5 Z"/></g></g></g>
<g transform="translate(0,8.00)"><g transform="matrix(1.19121,-0.30480,0.31019,1.11767,718.725,434.294)"><g transform="rotate(1.3)"><path fill="#585858" fill-rule="evenodd" d="M-67 -106 H67.5 A24 24 0 0 1 91.5 -82 V84 A24 24 0 0 1 67.5 108 H-67 A24 24 0 0 1 -91 84 V-82 A24 24 0 0 1 -67 -106 Z M-61 -93.5 H63 A14 14 0 0 1 77 -79.5 V80 A14 14 0 0 1 63 94 H-61 A14 14 0 0 1 -75 80 V-79.5 A14 14 0 0 1 -61 -93.5 Z"/></g></g></g>
<g transform="translate(0,7.00)"><g transform="matrix(1.19121,-0.30480,0.31019,1.11767,718.725,434.294)"><g transform="rotate(1.3)"><path fill="#585858" fill-rule="evenodd" d="M-67 -106 H67.5 A24 24 0 0 1 91.5 -82 V84 A24 24 0 0 1 67.5 108 H-67 A24 24 0 0 1 -91 84 V-82 A24 24 0 0 1 -67 -106 Z M-61 -93.5 H63 A14 14 0 0 1 77 -79.5 V80 A14 14 0 0 1 63 94 H-61 A14 14 0 0 1 -75 80 V-79.5 A14 14 0 0 1 -61 -93.5 Z"/></g></g></g>
<g transform="translate(0,6.00)"><g transform="matrix(1.19121,-0.30480,0.31019,1.11767,718.725,434.294)"><g transform="rotate(1.3)"><path fill="#585858" fill-rule="evenodd" d="M-67 -106 H67.5 A24 24 0 0 1 91.5 -82 V84 A24 24 0 0 1 67.5 108 H-67 A24 24 0 0 1 -91 84 V-82 A24 24 0 0 1 -67 -106 Z M-61 -93.5 H63 A14 14 0 0 1 77 -79.5 V80 A14 14 0 0 1 63 94 H-61 A14 14 0 0 1 -75 80 V-79.5 A14 14 0 0 1 -61 -93.5 Z"/></g></g></g>
<g transform="translate(0,5.00)"><g transform="matrix(1.19121,-0.30480,0.31019,1.11767,718.725,434.294)"><g transform="rotate(1.3)"><path fill="#585858" fill-rule="evenodd" d="M-67 -106 H67.5 A24 24 0 0 1 91.5 -82 V84 A24 24 0 0 1 67.5 108 H-67 A24 24 0 0 1 -91 84 V-82 A24 24 0 0 1 -67 -106 Z M-61 -93.5 H63 A14 14 0 0 1 77 -79.5 V80 A14 14 0 0 1 63 94 H-61 A14 14 0 0 1 -75 80 V-79.5 A14 14 0 0 1 -61 -93.5 Z"/></g></g></g>
<g transform="translate(0,4.00)"><g transform="matrix(1.19121,-0.30480,0.31019,1.11767,718.725,434.294)"><g transform="rotate(1.3)"><path fill="#585858" fill-rule="evenodd" d="M-67 -106 H67.5 A24 24 0 0 1 91.5 -82 V84 A24 24 0 0 1 67.5 108 H-67 A24 24 0 0 1 -91 84 V-82 A24 24 0 0 1 -67 -106 Z M-61 -93.5 H63 A14 14 0 0 1 77 -79.5 V80 A14 14 0 0 1 63 94 H-61 A14 14 0 0 1 -75 80 V-79.5 A14 14 0 0 1 -61 -93.5 Z"/></g></g></g>
<g transform="translate(0,3.00)"><g transform="matrix(1.19121,-0.30480,0.31019,1.11767,718.725,434.294)"><g transform="rotate(1.3)"><path fill="#585858" fill-rule="evenodd" d="M-67 -106 H67.5 A24 24 0 0 1 91.5 -82 V84 A24 24 0 0 1 67.5 108 H-67 A24 24 0 0 1 -91 84 V-82 A24 24 0 0 1 -67 -106 Z M-61 -93.5 H63 A14 14 0 0 1 77 -79.5 V80 A14 14 0 0 1 63 94 H-61 A14 14 0 0 1 -75 80 V-79.5 A14 14 0 0 1 -61 -93.5 Z"/></g></g></g>
<g transform="translate(0,2.00)"><g transform="matrix(1.19121,-0.30480,0.31019,1.11767,718.725,434.294)"><g transform="rotate(1.3)"><path fill="#585858" fill-rule="evenodd" d="M-67 -106 H67.5 A24 24 0 0 1 91.5 -82 V84 A24 24 0 0 1 67.5 108 H-67 A24 24 0 0 1 -91 84 V-82 A24 24 0 0 1 -67 -106 Z M-61 -93.5 H63 A14 14 0 0 1 77 -79.5 V80 A14 14 0 0 1 63 94 H-61 A14 14 0 0 1 -75 80 V-79.5 A14 14 0 0 1 -61 -93.5 Z"/></g></g></g>
<g transform="translate(0,1.00)"><g transform="matrix(1.19121,-0.30480,0.31019,1.11767,718.725,434.294)"><g transform="rotate(1.3)"><path fill="#585858" fill-rule="evenodd" d="M-67 -106 H67.5 A24 24 0 0 1 91.5 -82 V84 A24 24 0 0 1 67.5 108 H-67 A24 24 0 0 1 -91 84 V-82 A24 24 0 0 1 -67 -106 Z M-61 -93.5 H63 A14 14 0 0 1 77 -79.5 V80 A14 14 0 0 1 63 94 H-61 A14 14 0 0 1 -75 80 V-79.5 A14 14 0 0 1 -61 -93.5 Z"/></g></g></g>
<g transform="translate(0,0.00)"><g transform="matrix(1.19121,-0.30480,0.31019,1.11767,718.725,434.294)"><g transform="rotate(1.3)"><path fill="#ffffff" fill-rule="evenodd" d="M-67 -106 H67.5 A24 24 0 0 1 91.5 -82 V84 A24 24 0 0 1 67.5 108 H-67 A24 24 0 0 1 -91 84 V-82 A24 24 0 0 1 -67 -106 Z M-61 -93.5 H63 A14 14 0 0 1 77 -79.5 V80 A14 14 0 0 1 63 94 H-61 A14 14 0 0 1 -75 80 V-79.5 A14 14 0 0 1 -61 -93.5 Z"/></g></g></g>
<g transform="translate(0,11.00)"><g transform="matrix(1.19121,-0.30480,0.31019,1.11767,718.725,434.294)"><g transform="rotate(1.3)"><rect fill="#585858" x="-6" y="-67" width="72.5" height="6" rx="3"/><rect fill="#585858" x="-6.5" y="-37" width="73" height="6" rx="3"/><rect fill="#585858" x="-6.5" y="-7" width="73.5" height="6" rx="3"/><rect fill="#585858" x="-64" y="51" width="72.5" height="6" rx="3"/><rect fill="#585858" x="-64" y="81" width="72.5" height="6" rx="3"/></g></g></g>
<g transform="translate(0,10.00)"><g transform="matrix(1.19121,-0.30480,0.31019,1.11767,718.725,434.294)"><g transform="rotate(1.3)"><rect fill="#585858" x="-6" y="-67" width="72.5" height="6" rx="3"/><rect fill="#585858" x="-6.5" y="-37" width="73" height="6" rx="3"/><rect fill="#585858" x="-6.5" y="-7" width="73.5" height="6" rx="3"/><rect fill="#585858" x="-64" y="51" width="72.5" height="6" rx="3"/><rect fill="#585858" x="-64" y="81" width="72.5" height="6" rx="3"/></g></g></g>
<g transform="translate(0,9.00)"><g transform="matrix(1.19121,-0.30480,0.31019,1.11767,718.725,434.294)"><g transform="rotate(1.3)"><rect fill="#585858" x="-6" y="-67" width="72.5" height="6" rx="3"/><rect fill="#585858" x="-6.5" y="-37" width="73" height="6" rx="3"/><rect fill="#585858" x="-6.5" y="-7" width="73.5" height="6" rx="3"/><rect fill="#585858" x="-64" y="51" width="72.5" height="6" rx="3"/><rect fill="#585858" x="-64" y="81" width="72.5" height="6" rx="3"/></g></g></g>
<g transform="translate(0,8.00)"><g transform="matrix(1.19121,-0.30480,0.31019,1.11767,718.725,434.294)"><g transform="rotate(1.3)"><rect fill="#585858" x="-6" y="-67" width="72.5" height="6" rx="3"/><rect fill="#585858" x="-6.5" y="-37" width="73" height="6" rx="3"/><rect fill="#585858" x="-6.5" y="-7" width="73.5" height="6" rx="3"/><rect fill="#585858" x="-64" y="51" width="72.5" height="6" rx="3"/><rect fill="#585858" x="-64" y="81" width="72.5" height="6" rx="3"/></g></g></g>
<g transform="translate(0,7.00)"><g transform="matrix(1.19121,-0.30480,0.31019,1.11767,718.725,434.294)"><g transform="rotate(1.3)"><rect fill="#585858" x="-6" y="-67" width="72.5" height="6" rx="3"/><rect fill="#585858" x="-6.5" y="-37" width="73" height="6" rx="3"/><rect fill="#585858" x="-6.5" y="-7" width="73.5" height="6" rx="3"/><rect fill="#585858" x="-64" y="51" width="72.5" height="6" rx="3"/><rect fill="#585858" x="-64" y="81" width="72.5" height="6" rx="3"/></g></g></g>
<g transform="translate(0,6.00)"><g transform="matrix(1.19121,-0.30480,0.31019,1.11767,718.725,434.294)"><g transform="rotate(1.3)"><rect fill="#585858" x="-6" y="-67" width="72.5" height="6" rx="3"/><rect fill="#585858" x="-6.5" y="-37" width="73" height="6" rx="3"/><rect fill="#585858" x="-6.5" y="-7" width="73.5" height="6" rx="3"/><rect fill="#585858" x="-64" y="51" width="72.5" height="6" rx="3"/><rect fill="#585858" x="-64" y="81" width="72.5" height="6" rx="3"/></g></g></g>
<g transform="translate(0,5.00)"><g transform="matrix(1.19121,-0.30480,0.31019,1.11767,718.725,434.294)"><g transform="rotate(1.3)"><rect fill="#585858" x="-6" y="-67" width="72.5" height="6" rx="3"/><rect fill="#585858" x="-6.5" y="-37" width="73" height="6" rx="3"/><rect fill="#585858" x="-6.5" y="-7" width="73.5" height="6" rx="3"/><rect fill="#585858" x="-64" y="51" width="72.5" height="6" rx="3"/><rect fill="#585858" x="-64" y="81" width="72.5" height="6" rx="3"/></g></g></g>
<g transform="translate(0,4.00)"><g transform="matrix(1.19121,-0.30480,0.31019,1.11767,718.725,434.294)"><g transform="rotate(1.3)"><rect fill="#585858" x="-6" y="-67" width="72.5" height="6" rx="3"/><rect fill="#585858" x="-6.5" y="-37" width="73" height="6" rx="3"/><rect fill="#585858" x="-6.5" y="-7" width="73.5" height="6" rx="3"/><rect fill="#585858" x="-64" y="51" width="72.5" height="6" rx="3"/><rect fill="#585858" x="-64" y="81" width="72.5" height="6" rx="3"/></g></g></g>
<g transform="translate(0,3.00)"><g transform="matrix(1.19121,-0.30480,0.31019,1.11767,718.725,434.294)"><g transform="rotate(1.3)"><rect fill="#585858" x="-6" y="-67" width="72.5" height="6" rx="3"/><rect fill="#585858" x="-6.5" y="-37" width="73" height="6" rx="3"/><rect fill="#585858" x="-6.5" y="-7" width="73.5" height="6" rx="3"/><rect fill="#585858" x="-64" y="51" width="72.5" height="6" rx="3"/><rect fill="#585858" x="-64" y="81" width="72.5" height="6" rx="3"/></g></g></g>
<g transform="translate(0,2.00)"><g transform="matrix(1.19121,-0.30480,0.31019,1.11767,718.725,434.294)"><g transform="rotate(1.3)"><rect fill="#585858" x="-6" y="-67" width="72.5" height="6" rx="3"/><rect fill="#585858" x="-6.5" y="-37" width="73" height="6" rx="3"/><rect fill="#585858" x="-6.5" y="-7" width="73.5" height="6" rx="3"/><rect fill="#585858" x="-64" y="51" width="72.5" height="6" rx="3"/><rect fill="#585858" x="-64" y="81" width="72.5" height="6" rx="3"/></g></g></g>
<g transform="translate(0,1.00)"><g transform="matrix(1.19121,-0.30480,0.31019,1.11767,718.725,434.294)"><g transform="rotate(1.3)"><rect fill="#585858" x="-6" y="-67" width="72.5" height="6" rx="3"/><rect fill="#585858" x="-6.5" y="-37" width="73" height="6" rx="3"/><rect fill="#585858" x="-6.5" y="-7" width="73.5" height="6" rx="3"/><rect fill="#585858" x="-64" y="51" width="72.5" height="6" rx="3"/><rect fill="#585858" x="-64" y="81" width="72.5" height="6" rx="3"/></g></g></g>
<g transform="translate(0,0.00)"><g transform="matrix(1.19121,-0.30480,0.31019,1.11767,718.725,434.294)"><g transform="rotate(1.3)"><rect fill="#ffffff" x="-6" y="-67" width="72.5" height="6" rx="3"/><rect fill="#ffffff" x="-6.5" y="-37" width="73" height="6" rx="3"/><rect fill="#ffffff" x="-6.5" y="-7" width="73.5" height="6" rx="3"/><rect fill="#ffffff" x="-64" y="51" width="72.5" height="6" rx="3"/><rect fill="#ffffff" x="-64" y="81" width="72.5" height="6" rx="3"/></g></g></g>
<g transform="translate(0,13.00)"><g transform="matrix(1.19121,-0.30480,0.31019,1.11767,718.725,434.294)"><path d="M-22 -51 C-22 -61 -29 -66 -35.5 -66 C-42 -66 -47.5 -61 -47.5 -53 C-47.5 -43 -23 -42 -23 -20 C-23 -9 -29 -3 -35.5 -3 C-43 -3 -49 -9 -49 -22" fill="none" stroke="#0c5a1d" stroke-width="13.5"/><rect fill="#0c5a1d" x="-41.2" y="-80" width="10.8" height="10"/><rect fill="#0c5a1d" x="-40.8" y="0" width="10.8" height="11"/></g></g>
<g transform="translate(0,12.00)"><g transform="matrix(1.19121,-0.30480,0.31019,1.11767,718.725,434.294)"><path d="M-22 -51 C-22 -61 -29 -66 -35.5 -66 C-42 -66 -47.5 -61 -47.5 -53 C-47.5 -43 -23 -42 -23 -20 C-23 -9 -29 -3 -35.5 -3 C-43 -3 -49 -9 -49 -22" fill="none" stroke="#0c5a1d" stroke-width="13.5"/><rect fill="#0c5a1d" x="-41.2" y="-80" width="10.8" height="10"/><rect fill="#0c5a1d" x="-40.8" y="0" width="10.8" height="11"/></g></g>
<g transform="translate(0,11.00)"><g transform="matrix(1.19121,-0.30480,0.31019,1.11767,718.725,434.294)"><path d="M-22 -51 C-22 -61 -29 -66 -35.5 -66 C-42 -66 -47.5 -61 -47.5 -53 C-47.5 -43 -23 -42 -23 -20 C-23 -9 -29 -3 -35.5 -3 C-43 -3 -49 -9 -49 -22" fill="none" stroke="#0c5a1d" stroke-width="13.5"/><rect fill="#0c5a1d" x="-41.2" y="-80" width="10.8" height="10"/><rect fill="#0c5a1d" x="-40.8" y="0" width="10.8" height="11"/></g></g>
<g transform="translate(0,10.00)"><g transform="matrix(1.19121,-0.30480,0.31019,1.11767,718.725,434.294)"><path d="M-22 -51 C-22 -61 -29 -66 -35.5 -66 C-42 -66 -47.5 -61 -47.5 -53 C-47.5 -43 -23 -42 -23 -20 C-23 -9 -29 -3 -35.5 -3 C-43 -3 -49 -9 -49 -22" fill="none" stroke="#0c5a1d" stroke-width="13.5"/><rect fill="#0c5a1d" x="-41.2" y="-80" width="10.8" height="10"/><rect fill="#0c5a1d" x="-40.8" y="0" width="10.8" height="11"/></g></g>
<g transform="translate(0,9.00)"><g transform="matrix(1.19121,-0.30480,0.31019,1.11767,718.725,434.294)"><path d="M-22 -51 C-22 -61 -29 -66 -35.5 -66 C-42 -66 -47.5 -61 -47.5 -53 C-47.5 -43 -23 -42 -23 -20 C-23 -9 -29 -3 -35.5 -3 C-43 -3 -49 -9 -49 -22" fill="none" stroke="#0c5a1d" stroke-width="13.5"/><rect fill="#0c5a1d" x="-41.2" y="-80" width="10.8" height="10"/><rect fill="#0c5a1d" x="-40.8" y="0" width="10.8" height="11"/></g></g>
<g transform="translate(0,8.00)"><g transform="matrix(1.19121,-0.30480,0.31019,1.11767,718.725,434.294)"><path d="M-22 -51 C-22 -61 -29 -66 -35.5 -66 C-42 -66 -47.5 -61 -47.5 -53 C-47.5 -43 -23 -42 -23 -20 C-23 -9 -29 -3 -35.5 -3 C-43 -3 -49 -9 -49 -22" fill="none" stroke="#0c5a1d" stroke-width="13.5"/><rect fill="#0c5a1d" x="-41.2" y="-80" width="10.8" height="10"/><rect fill="#0c5a1d" x="-40.8" y="0" width="10.8" height="11"/></g></g>
<g transform="translate(0,7.00)"><g transform="matrix(1.19121,-0.30480,0.31019,1.11767,718.725,434.294)"><path d="M-22 -51 C-22 -61 -29 -66 -35.5 -66 C-42 -66 -47.5 -61 -47.5 -53 C-47.5 -43 -23 -42 -23 -20 C-23 -9 -29 -3 -35.5 -3 C-43 -3 -49 -9 -49 -22" fill="none" stroke="#0c5a1d" stroke-width="13.5"/><rect fill="#0c5a1d" x="-41.2" y="-80" width="10.8" height="10"/><rect fill="#0c5a1d" x="-40.8" y="0" width="10.8" height="11"/></g></g>
<g transform="translate(0,6.00)"><g transform="matrix(1.19121,-0.30480,0.31019,1.11767,718.725,434.294)"><path d="M-22 -51 C-22 -61 -29 -66 -35.5 -66 C-42 -66 -47.5 -61 -47.5 -53 C-47.5 -43 -23 -42 -23 -20 C-23 -9 -29 -3 -35.5 -3 C-43 -3 -49 -9 -49 -22" fill="none" stroke="#0c5a1d" stroke-width="13.5"/><rect fill="#0c5a1d" x="-41.2" y="-80" width="10.8" height="10"/><rect fill="#0c5a1d" x="-40.8" y="0" width="10.8" height="11"/></g></g>
<g transform="translate(0,5.00)"><g transform="matrix(1.19121,-0.30480,0.31019,1.11767,718.725,434.294)"><path d="M-22 -51 C-22 -61 -29 -66 -35.5 -66 C-42 -66 -47.5 -61 -47.5 -53 C-47.5 -43 -23 -42 -23 -20 C-23 -9 -29 -3 -35.5 -3 C-43 -3 -49 -9 -49 -22" fill="none" stroke="#0c5a1d" stroke-width="13.5"/><rect fill="#0c5a1d" x="-41.2" y="-80" width="10.8" height="10"/><rect fill="#0c5a1d" x="-40.8" y="0" width="10.8" height="11"/></g></g>
<g transform="translate(0,4.00)"><g transform="matrix(1.19121,-0.30480,0.31019,1.11767,718.725,434.294)"><path d="M-22 -51 C-22 -61 -29 -66 -35.5 -66 C-42 -66 -47.5 -61 -47.5 -53 C-47.5 -43 -23 -42 -23 -20 C-23 -9 -29 -3 -35.5 -3 C-43 -3 -49 -9 -49 -22" fill="none" stroke="#0c5a1d" stroke-width="13.5"/><rect fill="#0c5a1d" x="-41.2" y="-80" width="10.8" height="10"/><rect fill="#0c5a1d" x="-40.8" y="0" width="10.8" height="11"/></g></g>
<g transform="translate(0,3.00)"><g transform="matrix(1.19121,-0.30480,0.31019,1.11767,718.725,434.294)"><path d="M-22 -51 C-22 -61 -29 -66 -35.5 -66 C-42 -66 -47.5 -61 -47.5 -53 C-47.5 -43 -23 -42 -23 -20 C-23 -9 -29 -3 -35.5 -3 C-43 -3 -49 -9 -49 -22" fill="none" stroke="#1fc24a" stroke-width="13.5"/><rect fill="#1fc24a" x="-41.2" y="-80" width="10.8" height="10"/><rect fill="#1fc24a" x="-40.8" y="0" width="10.8" height="11"/></g></g>
<g transform="translate(0,14.00)"><g transform="matrix(1.19121,-0.30480,0.31019,1.11767,718.725,434.294)"><path fill="#0c5a1d" d="M-3.6 26.5 C10 25 30 27 45.6 33.9 C60 14 85 -10 102.6 -25.4 C115 -36 125 -43 134.5 -49.9 C115 -25 100 -5 93.1 4.3 C85 15 80 25 77.5 30.7 C68 45 58 65 53.7 79.5 C40 60 20 40 -3.6 26.5 Z"/></g></g>
<g transform="translate(0,13.00)"><g transform="matrix(1.19121,-0.30480,0.31019,1.11767,718.725,434.294)"><path fill="#0c5a1d" d="M-3.6 26.5 C10 25 30 27 45.6 33.9 C60 14 85 -10 102.6 -25.4 C115 -36 125 -43 134.5 -49.9 C115 -25 100 -5 93.1 4.3 C85 15 80 25 77.5 30.7 C68 45 58 65 53.7 79.5 C40 60 20 40 -3.6 26.5 Z"/></g></g>
<g transform="translate(0,12.00)"><g transform="matrix(1.19121,-0.30480,0.31019,1.11767,718.725,434.294)"><path fill="#0c5a1d" d="M-3.6 26.5 C10 25 30 27 45.6 33.9 C60 14 85 -10 102.6 -25.4 C115 -36 125 -43 134.5 -49.9 C115 -25 100 -5 93.1 4.3 C85 15 80 25 77.5 30.7 C68 45 58 65 53.7 79.5 C40 60 20 40 -3.6 26.5 Z"/></g></g>
<g transform="translate(0,11.00)"><g transform="matrix(1.19121,-0.30480,0.31019,1.11767,718.725,434.294)"><path fill="#0c5a1d" d="M-3.6 26.5 C10 25 30 27 45.6 33.9 C60 14 85 -10 102.6 -25.4 C115 -36 125 -43 134.5 -49.9 C115 -25 100 -5 93.1 4.3 C85 15 80 25 77.5 30.7 C68 45 58 65 53.7 79.5 C40 60 20 40 -3.6 26.5 Z"/></g></g>
<g transform="translate(0,10.00)"><g transform="matrix(1.19121,-0.30480,0.31019,1.11767,718.725,434.294)"><path fill="#0c5a1d" d="M-3.6 26.5 C10 25 30 27 45.6 33.9 C60 14 85 -10 102.6 -25.4 C115 -36 125 -43 134.5 -49.9 C115 -25 100 -5 93.1 4.3 C85 15 80 25 77.5 30.7 C68 45 58 65 53.7 79.5 C40 60 20 40 -3.6 26.5 Z"/></g></g>
<g transform="translate(0,9.00)"><g transform="matrix(1.19121,-0.30480,0.31019,1.11767,718.725,434.294)"><path fill="#0c5a1d" d="M-3.6 26.5 C10 25 30 27 45.6 33.9 C60 14 85 -10 102.6 -25.4 C115 -36 125 -43 134.5 -49.9 C115 -25 100 -5 93.1 4.3 C85 15 80 25 77.5 30.7 C68 45 58 65 53.7 79.5 C40 60 20 40 -3.6 26.5 Z"/></g></g>
<g transform="translate(0,8.00)"><g transform="matrix(1.19121,-0.30480,0.31019,1.11767,718.725,434.294)"><path fill="#0c5a1d" d="M-3.6 26.5 C10 25 30 27 45.6 33.9 C60 14 85 -10 102.6 -25.4 C115 -36 125 -43 134.5 -49.9 C115 -25 100 -5 93.1 4.3 C85 15 80 25 77.5 30.7 C68 45 58 65 53.7 79.5 C40 60 20 40 -3.6 26.5 Z"/></g></g>
<g transform="translate(0,7.00)"><g transform="matrix(1.19121,-0.30480,0.31019,1.11767,718.725,434.294)"><path fill="#0c5a1d" d="M-3.6 26.5 C10 25 30 27 45.6 33.9 C60 14 85 -10 102.6 -25.4 C115 -36 125 -43 134.5 -49.9 C115 -25 100 -5 93.1 4.3 C85 15 80 25 77.5 30.7 C68 45 58 65 53.7 79.5 C40 60 20 40 -3.6 26.5 Z"/></g></g>
<g transform="translate(0,6.00)"><g transform="matrix(1.19121,-0.30480,0.31019,1.11767,718.725,434.294)"><path fill="#0c5a1d" d="M-3.6 26.5 C10 25 30 27 45.6 33.9 C60 14 85 -10 102.6 -25.4 C115 -36 125 -43 134.5 -49.9 C115 -25 100 -5 93.1 4.3 C85 15 80 25 77.5 30.7 C68 45 58 65 53.7 79.5 C40 60 20 40 -3.6 26.5 Z"/></g></g>
<g transform="translate(0,5.00)"><g transform="matrix(1.19121,-0.30480,0.31019,1.11767,718.725,434.294)"><path fill="#0c5a1d" d="M-3.6 26.5 C10 25 30 27 45.6 33.9 C60 14 85 -10 102.6 -25.4 C115 -36 125 -43 134.5 -49.9 C115 -25 100 -5 93.1 4.3 C85 15 80 25 77.5 30.7 C68 45 58 65 53.7 79.5 C40 60 20 40 -3.6 26.5 Z"/></g></g>
<g transform="translate(0,4.00)"><g transform="matrix(1.19121,-0.30480,0.31019,1.11767,718.725,434.294)"><path fill="#0c5a1d" d="M-3.6 26.5 C10 25 30 27 45.6 33.9 C60 14 85 -10 102.6 -25.4 C115 -36 125 -43 134.5 -49.9 C115 -25 100 -5 93.1 4.3 C85 15 80 25 77.5 30.7 C68 45 58 65 53.7 79.5 C40 60 20 40 -3.6 26.5 Z"/></g></g>
<g transform="translate(0,3.00)"><g transform="matrix(1.19121,-0.30480,0.31019,1.11767,718.725,434.294)"><path fill="#1fc24a" d="M-3.6 26.5 C10 25 30 27 45.6 33.9 C60 14 85 -10 102.6 -25.4 C115 -36 125 -43 134.5 -49.9 C115 -25 100 -5 93.1 4.3 C85 15 80 25 77.5 30.7 C68 45 58 65 53.7 79.5 C40 60 20 40 -3.6 26.5 Z"/></g></g>
<rect x="615" y="51" width="436" height="50" fill="#dcdcdc" fill-opacity="0.94"/>
<g fill="none" stroke="#3d3d3d" stroke-width="1.6" stroke-linejoin="round"><path d="M620.6 69.1 H642 V89.7 H620.6 Z"/><path d="M620.6 69.1 L630.4 59.3 H651.4 L642 69.1"/><path d="M651.4 59.3 V75"/></g>
<circle cx="651" cy="82.4" r="6.8" fill="#dcdcdc" stroke="#3d3d3d" stroke-width="1.3"/><path d="M646.8 82.4 H655.2 M651 78.2 V86.6" stroke="#3d3d3d" stroke-width="1.2"/>
<g fill="none" stroke="#3d3d3d" stroke-width="1.3"><rect x="666.4" y="60.1" width="29.1" height="28.3"/><path d="M672.2 60.1 V88.4 M666.4 65.8 H695.5"/><path d="M678.0 60.1 V88.4 M666.4 71.4 H695.5"/><path d="M683.9 60.1 V88.4 M666.4 77.1 H695.5"/><path d="M689.7 60.1 V88.4 M666.4 82.7 H695.5"/></g>
<circle cx="692.9" cy="84.1" r="6.8" fill="#dcdcdc" stroke="#3d3d3d" stroke-width="1.3"/><path d="M688.7 84.1 H697.1 M692.9 79.9 V88.3" stroke="#3d3d3d" stroke-width="1.2"/>
<g fill="none" stroke="#3d3d3d" stroke-width="1.3"><path d="M727 60.3 L745 65.8 L739.5 83 L722.2 77.5 Z"/><path d="M720 74 Q714 77 713 83"/></g><path d="M710 80 L717 84 L712 88 Z" fill="none" stroke="#3d3d3d" stroke-width="1.2"/><rect x="714.7" y="88.2" width="29" height="3.2" rx="1.6" fill="#3d3d3d"/>
<text x="710" y="69.5" font-family="Liberation Sans" font-weight="bold" font-size="6" fill="#3d3d3d">AUTO</text>
<g fill="none" stroke="#3d3d3d" stroke-width="1.4"><rect x="755.4" y="60.3" width="31" height="31"/><rect x="759.5" y="63" width="24.8" height="9"/><rect x="759.5" y="74" width="6.9" height="13.9"/><rect x="769.2" y="74" width="14.4" height="6.3"/><rect x="769.2" y="82.4" width="14.4" height="5.5"/></g>
<g stroke="#c6c6c6" stroke-width="1.2"><path d="M801.6 64.0 H828.5"/><path d="M801.6 67.5 H828.5"/><path d="M801.6 71.1 H828.5"/><path d="M801.6 74.7 H828.5"/><path d="M801.6 78.2 H828.5"/><path d="M801.6 81.8 H828.5"/><path d="M801.6 85.3 H828.5"/><path d="M801.6 88.8 H828.5"/></g>
<rect x="846.3" y="60.3" width="2" height="31" fill="#5a5a5a"/>
<g fill="none" stroke="#c3c3c3" stroke-width="1.2"><path d="M883 61 L879 66 H881.5 V70 H884.5 V66 H887 Z"/><path d="M883 92 L879 87 H881.5 V83 H884.5 V87 H887 Z"/><path d="M866 76.5 L871 72.5 V75 H875 V78 H871 V80.5 Z"/><path d="M900 76.5 L895 72.5 V75 H891 V78 H895 V80.5 Z"/><rect x="881" y="74.5" width="4" height="4"/></g>
<g fill="none" stroke="#c3c3c3" stroke-width="1.2"><path d="M927 63 L939 76 L927 89 L915 76 Z"/><path d="M913 82 A15 15 0 0 1 935 62"/><path d="M933 59 L943 62 L937 69 Z"/></g>
<g fill="none" stroke="#c3c3c3" stroke-width="1.2"><rect x="955" y="74" width="18" height="17"/><path d="M955 60 H988 V92 H975" stroke-dasharray="2 2"/><path d="M976 71 L985 62 M980 62 H985 V67"/></g>
<g fill="none" stroke="#c3c3c3" stroke-width="1.2"><path d="M1012 61 L1031 65 L1027 83 L1009 79 Z"/><path d="M1002 82 L1010 79 L1006 87 Z"/><rect x="1003" y="88" width="28" height="3"/></g>
<g fill="none" stroke="#c3c3c3" stroke-width="1.2"><path d="M1046 60 V92 H1060 M1046 72 H1060"/></g>
<rect x="359" y="51" width="20" height="20" fill="#e2e2e2"/>
<path d="M366 57 L363 61 L366 65 M372 57 L375 61 L372 65" fill="none" stroke="#333" stroke-width="1.1"/><rect x="368.5" y="56" width="1.3" height="10" fill="#888"/>
<path d="M383 957 L445.5 943.4 L458.3 988 L463.5 1002 L463.5 1019.6 L401 1039.3 L383 975 Z" fill="#d0d0d0"/>
<g stroke="#9a9a9a" stroke-width="0.6" stroke-dasharray="1.5 1.5" fill="none"><path d="M386 972 L448 957 M392 996 L457 981 M400 1020 L462 1005 M400 955 L414 1036 M422 950 L438 1030"/></g>
<text transform="translate(422,985) rotate(-12)" font-family="Liberation Sans" font-size="12" fill="#555" text-anchor="middle">Top</text>
<path d="M401 1038.5 L461 1021" stroke="#d9817e" stroke-width="2.6"/><path d="M459 1015 L468 1020.3 L461 1027 Z" fill="#d9817e"/><text x="477" y="1023" font-family="Liberation Sans" font-size="12" fill="#d9817e">x</text>
<path d="M400.5 1038 L383 980" stroke="#6cc16a" stroke-width="2.6"/><path d="M376.5 984 L381 973 L388 982 Z" fill="#6cc16a"/><text x="373" y="969" font-family="Liberation Sans" font-size="12" fill="#6cc16a">y</text>
<path d="M400.5 1037 V1015" stroke="#8480d6" stroke-width="2.6"/><path d="M396 1017 L400.5 1008 L405 1017 Z" fill="#8480d6"/>
<text x="418" y="1026" transform="rotate(-14 418 1026)" font-family="Liberation Sans" font-size="6" fill="#333">Front</text>
<circle cx="514" cy="1023" r="18" fill="#e1e1e1"/>
<g fill="none" stroke="#555" stroke-width="1.4"><path d="M503 1018 V1013 H508 M520 1013 H525 V1018 M525 1028 V1033 H520 M508 1033 H503 V1028"/><path d="M514 1016 L520 1019.5 V1026.5 L514 1030 L508 1026.5 V1019.5 Z M508 1019.5 L514 1023 L520 1019.5 M514 1023 V1030"/></g>
</g></svg>
<div class="r" style="left:0.00px;top:0.00px;width:1051.00px;height:14.00px;background:#242a2b"></div>
<div class="r" style="left:0.00px;top:13.50px;width:1051.00px;height:1.00px;background:#111314"></div>
<div class="r" style="left:0.00px;top:14.50px;width:1051.00px;height:36.50px;background:#3a4446"></div>
<div class="r" style="left:0.00px;top:14.50px;width:110.00px;height:36.50px;background:#00ae42"></div>
<svg class="r" style="left:8.00px;top:0.00px;" width="12" height="4" viewBox="0 0 12 4"><circle cx="5.5" cy="0.5" r="1.6" fill="#fff"/></svg>
<div class="r" style="left:38.00px;top:0.00px;width:1.00px;height:11.00px;background:#5a5f62"></div>
<svg class="r" style="left:61.00px;top:0.00px;" width="18" height="8" viewBox="0 0 18 8"><path d="M1.5 -2 V6.5 H16.5 V-2" fill="none" stroke="#fff" stroke-width="1.6"/><rect x="4.5" y="3.2" width="9" height="2.2" fill="#fff"/></svg>
<svg class="r" style="left:101.00px;top:0.00px;" width="18" height="8" viewBox="0 0 18 8"><path d="M2 0.5 L7 4 L9 2.5 C12 2.5 14 4 15.5 6.5 C14 3.5 12 1 9 0 L7 -2 Z" fill="#fff"/></svg>
<svg class="r" style="left:139.00px;top:0.00px;" width="18" height="8" viewBox="0 0 18 8"><path d="M16 0.5 L11 4 L9 2.5 C6 2.5 4 4 2.5 6.5 C4 3.5 6 1 9 0 L11 -2 Z" fill="#6b7073"/></svg>
<span class="t" style="left:934.00px;top:-5.31px;font-size:11.00px;color:#fff;font-weight:normal;">Base</span>
<svg class="r" style="left:1.00px;top:24.00px;" width="19" height="18" viewBox="0 0 19 18"><path d="M9.5 1.2 L17.6 5.2 L17.6 12.8 L9.5 16.8 L1.4 12.8 L1.4 5.2 Z M1.4 5.2 L9.5 9.2 L17.6 5.2 M9.5 9.2 L9.5 16.8" fill="none" stroke="#fff" stroke-width="1.2" stroke-linejoin="round"/></svg>
<span class="t" style="left:29.50px;top:24.63px;font-size:15.20px;color:#fff;font-weight:normal;">Prepare</span>
<svg class="r" style="left:137.00px;top:24.00px;" width="18" height="18" viewBox="0 0 18 18"><g fill="none" stroke="#fff" stroke-width="1.2" stroke-linejoin="round"><path d="M9 1.5 L16.5 5.3 L9 9.1 L1.5 5.3 Z"/><path d="M2.2 8.5 L9 12 L15.8 8.5"/><path d="M2.2 11.8 L9 15.3 L15.8 11.8"/></g></svg>
<span class="t" style="left:165.30px;top:24.63px;font-size:15.20px;color:#fff;font-weight:normal;">Preview</span>
<svg class="r" style="left:276.00px;top:24.00px;" width="21" height="18" viewBox="0 0 21 18"><g fill="none" stroke="#fff" stroke-width="1.2"><rect x="1.5" y="1" width="8" height="6"/><path d="M5.5 7 V10 M3 10 H8"/><path d="M13 1.5 H19 V6.5 M1.5 12 V17 H6.5"/><path d="M11 11 H19 V17 H11 Z"/><path d="M13.5 14 H16.5"/></g></svg>
<span class="t" style="left:305.00px;top:24.76px;font-size:15.05px;color:#fff;font-weight:normal;">Device</span>
<svg class="r" style="left:412.00px;top:24.00px;" width="18" height="18" viewBox="0 0 18 18"><g fill="none" stroke="#fff" stroke-width="1.2"><rect x="2" y="1.5" width="14" height="15" rx="1"/><path d="M5 6 H6.2 M8 6 H13 M5 9 H6.2 M8 9 H13 M5 12 H6.2 M8 12 H13"/></g></svg>
<span class="t" style="left:440.20px;top:24.46px;font-size:15.40px;color:#fff;font-weight:normal;">Project</span>
<svg class="r" style="left:535.00px;top:25.00px;" width="16" height="16" viewBox="0 0 16 16"><g fill="none" stroke="#fff" stroke-width="1.4"><path d="M8 1.8 L13.4 4.9 V11.1 L8 14.2 L2.6 11.1 V4.9 Z"/><circle cx="8" cy="8" r="2.2"/></g></svg>
<span class="t" style="left:561.80px;top:24.04px;font-size:15.90px;color:#fff;font-weight:normal;">Calibration</span>
<div class="r" style="left:0.00px;top:51.00px;width:354.00px;height:1000.00px;background:#fff"></div>
<div class="r" style="left:354.00px;top:51.00px;width:1.00px;height:1000.00px;background:#9a9a9a"></div>
<div class="r" style="left:355.00px;top:51.00px;width:4.00px;height:1000.00px;background:#d6d6d6"></div>
<div class="r" style="left:0.00px;top:51.00px;width:354.00px;height:31.00px;background:linear-gradient(#f8f8f8,#efefef)"></div>
<div class="r" style="left:0.00px;top:82.00px;width:354.00px;height:1.00px;background:#d2d2d2"></div>
<span class="t" style="right:1033.40px;top:58.10px;font-size:15.00px;color:#262626;font-weight:normal;">Printer</span>
<svg class="r" style="left:322.00px;top:57.00px;" width="18" height="18" viewBox="0 0 18 18"><path d="M7.6 1.5h2.8l.5 2.1 1.6.9 2-.7 1.4 2.4-1.6 1.4v1.9l1.6 1.4-1.4 2.4-2-.7-1.6.9-.5 2.1H7.6l-.5-2.1-1.6-.9-2 .7-1.4-2.4 1.6-1.4V8.1L2.1 6.7l1.4-2.4 2 .7 1.6-.9z" fill="none" stroke="#262626" stroke-width="1.4" stroke-linejoin="round"/><circle cx="9" cy="9" r="2.2" fill="none" stroke="#262626" stroke-width="1.4"/></svg>
<div class="r" style="left:-20.00px;top:87.00px;width:169.00px;height:97.00px;border:1px solid #e9e9e9;border-radius:8px;background:#fff"></div>
<div class="r" style="left:154.00px;top:87.00px;width:95.00px;height:97.00px;border:1px solid #e9e9e9;border-radius:8px;background:#fff"></div>
<div class="r" style="left:254.00px;top:87.00px;width:96.00px;height:97.00px;border:1px solid #00ae42;border-radius:7px;background:#f6f6f6"></div>
<span class="t" style="left:4.80px;top:156.30px;font-size:15.00px;color:#262626;font-weight:normal;">Bambu Lab A1</span>
<svg class="r" style="left:20.00px;top:99.00px;" width="40" height="47" viewBox="0 0 40 47"><g transform="translate(-20,-99)"><path d="M39.4 111 C39.5 99 54 99 54.8 111" fill="none" stroke="#8a8a8a" stroke-width="0.9"/><path d="M56 112 C57 125 57 134 55 141" fill="none" stroke="#9a9a9a" stroke-width="0.7"/><rect x="28" y="112" width="3.8" height="28" fill="#cfcfcf" stroke="#8c8c8c" stroke-width="0.6"/><rect x="50.5" y="111" width="5.5" height="29" fill="#c9c9c9" stroke="#888" stroke-width="0.6"/><path d="M24 116 L59 117 L59 121 L24 120 Z" fill="#b9b9b9" stroke="#808080" stroke-width="0.6"/><rect x="24" y="117" width="4" height="6" fill="#bdbdbd" stroke="#888" stroke-width="0.5"/><rect x="36" y="110" width="5" height="10" fill="#6e6e6e"/><path d="M21.5 141 L44 137.5 L56.5 138 L56.5 144 L34 145.5 L21.5 144.5 Z" fill="#d2d2d2" stroke="#8a8a8a" stroke-width="0.6"/><path d="M42 138 L55 138.3 L55 141 L42 141.5 Z" fill="#4a4a4a"/></g></svg>
<svg class="r" style="left:180.00px;top:101.00px;" width="44" height="47" viewBox="0 0 44 47"><rect x="1" y="2" width="42" height="44" fill="#c9a25a"/><rect x="1" y="2" width="42" height="44" fill="url(#pg)"/><defs><linearGradient id="pg" x1="0" y1="0" x2="1" y2="1"><stop offset="0" stop-color="#d8b36b" stop-opacity=".6"/><stop offset="1" stop-color="#b58c45" stop-opacity=".6"/></linearGradient></defs><rect x="15" y="0" width="14" height="2" fill="#c9a25a"/><rect x="18" y="16" width="9" height="14" fill="none" stroke="#d9bf88" stroke-width="0.5"/></svg>
<svg class="r" style="left:227.00px;top:99.00px;" width="14" height="14" viewBox="0 0 14 14"><circle cx="7" cy="7" r="5.8" fill="none" stroke="#555" stroke-width="1.2"/><rect x="6.3" y="6" width="1.4" height="4.2" fill="#555"/><circle cx="7" cy="4.2" r="0.8" fill="#555"/></svg>
<svg class="r" style="left:162.00px;top:160.00px;" width="13" height="8" viewBox="0 0 13 8"><path d="M1.5 2 L6.5 6 L11.5 2" fill="none" stroke="#999" stroke-width="1"/></svg>
<span class="t" style="left:181.00px;top:156.30px;font-size:15.00px;color:#262626;font-weight:normal;">Texture…</span>
<svg class="r" style="left:286.50px;top:108.60px;" width="30" height="30" viewBox="0 0 30 30"><g fill="none" stroke="#00ae42" stroke-width="2.2"><path d="M5.13 11.41 A10.5 10.5 0 0 1 25.34 13.18"/><path d="M24.87 18.59 A10.5 10.5 0 0 1 4.66 16.82"/></g><path fill="#00ae42" d="M26.04 17.12 L21.72 12.80 L28.61 11.58 Z M3.96 12.88 L8.28 17.20 L1.39 18.42 Z"/></svg>
<span class="t" style="left:270.00px;top:146.55px;font-size:15.30px;color:#262626;font-weight:normal;">Sync info</span>
<div class="r" style="left:-20.00px;top:195.00px;width:370.00px;height:54.00px;border:1px solid #e8e8e8;border-radius:6px"></div>
<span class="t" style="right:1044.50px;top:217.00px;font-size:15.00px;color:#262626;font-weight:normal;">Nozzle Diameter</span>
<div class="r" style="left:9.40px;top:212.30px;width:134.00px;height:25.00px;border:1px solid #dcdcdc"></div>
<svg class="r" style="left:16.00px;top:221.00px;" width="12" height="8" viewBox="0 0 12 8"><path d="M1.5 2 L6 5.8 L10.5 2" fill="none" stroke="#a0a0a0" stroke-width="1"/></svg>
<span class="t" style="left:33.40px;top:216.41px;font-size:15.70px;color:#262626;font-weight:normal;">0.4</span>
<span class="t" style="left:152.50px;top:217.00px;font-size:15.00px;color:#262626;font-weight:normal;">Flow</span>
<div class="r" style="left:187.50px;top:212.30px;width:149.50px;height:25.00px;border:1px solid #dcdcdc"></div>
<svg class="r" style="left:193.00px;top:221.00px;" width="12" height="8" viewBox="0 0 12 8"><path d="M1.5 2 L6 5.8 L10.5 2" fill="none" stroke="#a0a0a0" stroke-width="1"/></svg>
<span class="t" style="left:210.70px;top:216.41px;font-size:15.70px;color:#262626;font-weight:normal;">Standard</span>
<div class="r" style="left:0.00px;top:255.00px;width:354.00px;height:31.00px;background:linear-gradient(#f8f8f8,#efefef)"></div>
<div class="r" style="left:0.00px;top:255.00px;width:354.00px;height:1.20px;background:#b9b9b9"></div>
<div class="r" style="left:0.00px;top:286.00px;width:354.00px;height:1.00px;background:#dedede"></div>
<span class="t" style="right:961.60px;top:262.10px;font-size:15.00px;color:#262626;font-weight:normal;">Project Filaments</span>
<div class="r" style="left:125.00px;top:261.50px;width:98.50px;height:18.50px;border:1px solid #bcbcbc;border-radius:9px;background:#efefef"></div>
<span class="t" style="left:131.20px;top:265.20px;font-size:11.10px;color:#6f6f6f;font-weight:normal;">Flushing volumes</span>
<svg class="r" style="left:236.00px;top:262.00px;" width="16" height="16" viewBox="0 0 16 16"><path d="M8 2 V14 M2 8 H14" stroke="#3a3a3a" stroke-width="1.5"/></svg>
<svg class="r" style="left:264.00px;top:262.00px;" width="16" height="16" viewBox="0 0 16 16"><path d="M2 8 H14" stroke="#3a3a3a" stroke-width="1.5"/></svg>
<svg class="r" style="left:291.00px;top:261.00px;" width="20" height="19" viewBox="0 0 20 19"><g fill="none" stroke="#3a3a3a" stroke-width="1.3"><path d="M11 15.5 H2.5 V3 H16 V8"/><path d="M2.5 6.5 H16 M5.5 3 V6.5 M8.5 3 V6.5 M11.5 3 V6.5 M14 3 V6.5"/><path d="M2.5 10 H9"/></g><circle cx="14" cy="13.5" r="4.6" fill="#f4f4f4" stroke="#3a3a3a" stroke-width="1.3"/><path d="M11.8 12.5 H16.2 M11.8 14.5 H16.2" stroke="#3a3a3a" stroke-width="1"/></svg>
<svg class="r" style="left:320.50px;top:261.00px;" width="18" height="18" viewBox="0 0 18 18"><path d="M7.6 1.5h2.8l.5 2.1 1.6.9 2-.7 1.4 2.4-1.6 1.4v1.9l1.6 1.4-1.4 2.4-2-.7-1.6.9-.5 2.1H7.6l-.5-2.1-1.6-.9-2 .7-1.4-2.4 1.6-1.4V8.1L2.1 6.7l1.4-2.4 2 .7 1.6-.9z" fill="none" stroke="#262626" stroke-width="1.4" stroke-linejoin="round"/><circle cx="9" cy="9" r="2.2" fill="none" stroke="#262626" stroke-width="1.4"/></svg>
<div class="r" style="left:-30.00px;top:305.30px;width:135.50px;height:29.00px;border:1px solid #dcdcdc"></div>
<span class="t" style="right:985.00px;top:313.30px;font-size:13.00px;color:#262626;font-weight:normal;">Generic PLA</span>
<svg class="r" style="left:112.00px;top:311.30px;" width="16" height="16" viewBox="0 0 16 16"><circle cx="8" cy="8" r="6.8" fill="none" stroke="#333" stroke-width="1.3"/><circle cx="5.2" cy="8" r="0.9" fill="#333"/><circle cx="8" cy="8" r="0.9" fill="#333"/><circle cx="10.8" cy="8" r="0.9" fill="#333"/></svg>
<div class="r" style="left:-30.00px;top:339.40px;width:135.50px;height:29.00px;border:1px solid #dcdcdc"></div>
<span class="t" style="right:985.00px;top:347.40px;font-size:13.00px;color:#262626;font-weight:normal;">Generic PLA</span>
<svg class="r" style="left:112.00px;top:345.40px;" width="16" height="16" viewBox="0 0 16 16"><circle cx="8" cy="8" r="6.8" fill="none" stroke="#333" stroke-width="1.3"/><circle cx="5.2" cy="8" r="0.9" fill="#333"/><circle cx="8" cy="8" r="0.9" fill="#333"/><circle cx="10.8" cy="8" r="0.9" fill="#333"/></svg>
<div class="r" style="left:-30.00px;top:373.30px;width:135.50px;height:29.00px;border:1px solid #dcdcdc"></div>
<span class="t" style="right:985.00px;top:381.30px;font-size:13.00px;color:#262626;font-weight:normal;">Generic PLA</span>
<svg class="r" style="left:112.00px;top:379.30px;" width="16" height="16" viewBox="0 0 16 16"><circle cx="8" cy="8" r="6.8" fill="none" stroke="#333" stroke-width="1.3"/><circle cx="5.2" cy="8" r="0.9" fill="#333"/><circle cx="8" cy="8" r="0.9" fill="#333"/><circle cx="10.8" cy="8" r="0.9" fill="#333"/></svg>
<div class="r" style="left:154.00px;top:310.00px;width:20.00px;height:20.00px;background:#fd6a1c"></div>
<span class="t" style="left:164.00px;transform:translateX(-50%);top:311.26px;font-size:16.00px;color:#1a1a1a;font-weight:normal;">2</span>
<div class="r" style="left:154.00px;top:344.00px;width:20.00px;height:20.00px;background:#22bb44"></div>
<span class="t" style="left:164.00px;transform:translateX(-50%);top:345.26px;font-size:16.00px;color:#fff;font-weight:normal;">4</span>
<div class="r" style="left:180.30px;top:305.40px;width:135.40px;height:29.00px;border:1px solid #dcdcdc"></div>
<svg class="r" style="left:186.00px;top:316.00px;" width="12" height="8" viewBox="0 0 12 8"><path d="M1.5 2 L6 5.8 L10.5 2" fill="none" stroke="#a0a0a0" stroke-width="1"/></svg>
<span class="t" style="left:204.40px;top:313.40px;font-size:13.00px;color:#262626;font-weight:normal;">Generic PLA</span>
<svg class="r" style="left:322.00px;top:311.40px;" width="16" height="16" viewBox="0 0 16 16"><circle cx="8" cy="8" r="6.8" fill="none" stroke="#333" stroke-width="1.3"/><circle cx="5.2" cy="8" r="0.9" fill="#333"/><circle cx="8" cy="8" r="0.9" fill="#333"/><circle cx="10.8" cy="8" r="0.9" fill="#333"/></svg>
<div class="r" style="left:180.30px;top:339.20px;width:135.40px;height:29.00px;border:1px solid #dcdcdc"></div>
<svg class="r" style="left:186.00px;top:349.80px;" width="12" height="8" viewBox="0 0 12 8"><path d="M1.5 2 L6 5.8 L10.5 2" fill="none" stroke="#a0a0a0" stroke-width="1"/></svg>
<span class="t" style="left:204.40px;top:347.20px;font-size:13.00px;color:#262626;font-weight:normal;">Generic PLA</span>
<svg class="r" style="left:322.00px;top:345.20px;" width="16" height="16" viewBox="0 0 16 16"><circle cx="8" cy="8" r="6.8" fill="none" stroke="#333" stroke-width="1.3"/><circle cx="5.2" cy="8" r="0.9" fill="#333"/><circle cx="8" cy="8" r="0.9" fill="#333"/><circle cx="10.8" cy="8" r="0.9" fill="#333"/></svg>
<div class="r" style="left:0.00px;top:421.50px;width:354.00px;height:31.50px;background:linear-gradient(#f8f8f8,#efefef)"></div>
<div class="r" style="left:0.00px;top:421.50px;width:354.00px;height:1.20px;background:#b9b9b9"></div>
<div class="r" style="left:0.00px;top:452.50px;width:354.00px;height:1.20px;background:#b9b9b9"></div>
<span class="t" style="right:1029.00px;top:427.80px;font-size:15.00px;color:#262626;font-weight:normal;">cess</span>
<div class="r" style="left:31.30px;top:426.30px;width:102.70px;height:21.40px;background:#dadada;border-radius:11px"></div>
<div class="r" style="left:81.30px;top:426.30px;width:52.70px;height:21.40px;background:#00ae42;border-radius:11px"></div>
<span class="t" style="left:41.00px;top:430.84px;font-size:12.00px;color:#707070;font-weight:normal;">Global</span>
<span class="t" style="left:87.30px;top:430.76px;font-size:12.10px;color:#fff;font-weight:normal;">Objects</span>
<span class="t" style="left:187.20px;top:428.00px;font-size:15.00px;color:#262626;font-weight:normal;">Advanced</span>
<div class="r" style="left:257.30px;top:429.50px;width:26.70px;height:15.20px;background:#b4b4b4;border-radius:8px"></div>
<div class="r" style="left:258.30px;top:430.50px;width:13.20px;height:13.20px;background:#fff;border-radius:50%"></div>
<svg class="r" style="left:294.00px;top:429.00px;" width="16" height="16" viewBox="0 0 16 16"><g fill="#333"><rect x="1" y="2.5" width="2" height="1.6"/><rect x="1" y="7.2" width="2" height="1.6"/><rect x="1" y="11.9" width="2" height="1.6"/><rect x="5" y="2.5" width="10" height="1.6"/><rect x="5" y="7.2" width="10" height="1.6"/><rect x="5" y="11.9" width="10" height="1.6"/></g></svg>
<svg class="r" style="left:321.00px;top:428.00px;" width="18" height="18" viewBox="0 0 18 18"><g fill="none" stroke="#333" stroke-width="1.3"><path d="M3 15 L15 3"/><path d="M2 3.5 H7.5 L10 6 M7.5 3.5 L5 1"/><path d="M16 14.5 H10.5 L8 12 M10.5 14.5 L13 17"/></g></svg>
<span class="t" style="right:939.00px;top:457.50px;font-size:11.70px;color:#4f4f4f;font-weight:normal;">Search plate, object and part.</span>
<svg class="r" style="left:331.50px;top:456.50px;" width="16" height="16" viewBox="0 0 16 16"><circle cx="8" cy="8" r="7.5" fill="#9b9b9b"/><path d="M5 5 L11 11 M11 5 L5 11" stroke="#fff" stroke-width="1.8"/></svg>
<div class="r" style="left:-5.00px;top:476.00px;width:359.00px;height:216.00px;border:1px solid #808080;background:#fff"></div>
<div class="r" style="left:242.70px;top:477.00px;width:1.00px;height:24.00px;background:#ececec"></div>
<div class="r" style="left:272.50px;top:477.00px;width:1.00px;height:24.00px;background:#ececec"></div>
<div class="r" style="left:322.40px;top:477.00px;width:1.00px;height:24.00px;background:#ececec"></div>
<span class="t" style="left:286.60px;top:482.98px;font-size:11.60px;color:#262626;font-weight:normal;">Fila.</span>
<div class="r" style="left:0.00px;top:501.00px;width:336.50px;height:21.50px;background:#a1a1a1"></div>
<div class="r" style="left:251.00px;top:527.00px;width:14.00px;height:14.00px;background:#00ae42;border-radius:1px"></div>
<svg class="r" style="left:251.00px;top:527.00px;" width="14" height="14" viewBox="0 0 14 14"><path d="M3.5 7.2 L6.2 9.8 L10.8 4.8" fill="none" stroke="#fff" stroke-width="1.2"/></svg>
<div class="r" style="left:276.40px;top:524.40px;width:43.60px;height:19.20px;border:1px solid #777;background:#fff"></div>
<span class="t" style="left:298.20px;transform:translateX(-50%);top:527.33px;font-size:14.50px;color:#1a1a1a;font-weight:normal;">1</span>
<div class="r" style="left:276.40px;top:546.40px;width:43.60px;height:19.20px;background:#3c3c3c"></div>
<span class="t" style="left:298.20px;transform:translateX(-50%);top:549.33px;font-size:14.50px;color:#fff;font-weight:normal;">5</span>
<div class="r" style="left:276.40px;top:568.40px;width:43.60px;height:19.20px;border:1px solid #777;background:#fff"></div>
<span class="t" style="left:298.20px;transform:translateX(-50%);top:571.33px;font-size:14.50px;color:#1a1a1a;font-weight:normal;">1</span>
<div class="r" style="left:276.40px;top:590.40px;width:43.60px;height:19.20px;background:#21bd46"></div>
<span class="t" style="left:298.20px;transform:translateX(-50%);top:593.33px;font-size:14.50px;color:#fff;font-weight:normal;">4</span>
<div class="r" style="left:276.40px;top:612.40px;width:43.60px;height:19.20px;background:#21bd46"></div>
<span class="t" style="left:298.20px;transform:translateX(-50%);top:615.33px;font-size:14.50px;color:#fff;font-weight:normal;">4</span>
<div class="r" style="left:276.40px;top:634.40px;width:43.60px;height:19.20px;border:1px solid #777;background:#fff"></div>
<span class="t" style="left:298.20px;transform:translateX(-50%);top:637.33px;font-size:14.50px;color:#1a1a1a;font-weight:normal;">1</span>
<div class="r" style="left:276.40px;top:656.40px;width:43.60px;height:19.10px;border:1px solid #777;background:#fff"></div>
<span class="t" style="left:298.20px;transform:translateX(-50%);top:659.33px;font-size:14.50px;color:#1a1a1a;font-weight:normal;">1</span>
<span class="t" style="right:1016.70px;top:548.95px;font-size:12.70px;color:#262626;font-weight:normal;">Base.stl</span>
<span class="t" style="right:1005.00px;top:570.95px;font-size:12.70px;color:#262626;font-weight:normal;">Border.stl</span>
<span class="t" style="right:969.10px;top:592.95px;font-size:12.70px;color:#262626;font-weight:normal;">Correct_Sign.stl</span>
<span class="t" style="right:961.60px;top:614.95px;font-size:12.70px;color:#262626;font-weight:normal;">Dollar_Symbol.stl</span>
<span class="t" style="right:978.20px;top:636.95px;font-size:12.70px;color:#262626;font-weight:normal;">Inner_Circle.stl</span>
<span class="t" style="right:978.20px;top:658.95px;font-size:12.70px;color:#262626;font-weight:normal;">Page_Edge.stl</span>
<div class="r" style="left:337.40px;top:477.00px;width:15.00px;height:199.00px;background:#f0f0f0"></div>
<div class="r" style="left:337.40px;top:494.00px;width:15.00px;height:104.00px;background:#cdcdcd"></div>
<svg class="r" style="left:337.40px;top:479.00px;" width="15" height="14" viewBox="0 0 15 14"><path d="M3.5 9 L7.5 5 L11.5 9" fill="none" stroke="#333" stroke-width="1.4"/></svg>
<svg class="r" style="left:337.40px;top:659.00px;" width="15" height="14" viewBox="0 0 15 14"><path d="M3.5 5 L7.5 9 L11.5 5" fill="none" stroke="#333" stroke-width="1.4"/></svg>
<div class="r" style="left:0.00px;top:676.00px;width:337.40px;height:15.50px;background:#f0f0f0"></div>
<div class="r" style="left:0.00px;top:676.00px;width:302.00px;height:15.50px;background:#cdcdcd"></div>
<div class="r" style="left:337.40px;top:676.00px;width:15.00px;height:15.50px;background:#f0f0f0"></div>
<svg class="r" style="left:320.00px;top:677.00px;" width="14" height="14" viewBox="0 0 14 14"><path d="M5 3.5 L9 7.5 L5 11.5" fill="none" stroke="#333" stroke-width="1.4"/></svg>
<span class="t" style="right:1005.40px;top:695.50px;font-size:15.00px;color:#262626;font-weight:bold;">Plate Settings</span>
<div class="r" style="left:0.00px;top:715.30px;width:48.50px;height:2.60px;background:#00ae42;border-radius:1px"></div>
<div class="r" style="left:0.00px;top:718.00px;width:354.00px;height:1.00px;background:#d3d3d3"></div>
<span class="t" style="right:1017.50px;top:742.06px;font-size:15.40px;color:#2a2a2a;font-weight:normal;">type</span>
<span class="t" style="right:984.50px;top:771.76px;font-size:15.40px;color:#2a2a2a;font-weight:normal;">sequence</span>
<span class="t" style="right:1012.30px;top:801.76px;font-size:15.40px;color:#2a2a2a;font-weight:normal;">l vase</span>
<span class="t" style="right:888.20px;top:831.76px;font-size:15.40px;color:#2a2a2a;font-weight:normal;">layer filament sequence</span>
<span class="t" style="right:942.20px;top:861.76px;font-size:15.40px;color:#2a2a2a;font-weight:normal;">r layers filament</span>
<span class="t" style="right:1022.10px;top:880.16px;font-size:15.40px;color:#2a2a2a;font-weight:normal;">ence</span>
<div class="r" style="left:184.10px;top:737.20px;width:119.70px;height:25.50px;border:1px solid #dedede"></div>
<svg class="r" style="left:190.00px;top:746.20px;" width="12" height="8" viewBox="0 0 12 8"><path d="M1.5 2 L6 5.8 L10.5 2" fill="none" stroke="#a0a0a0" stroke-width="1"/></svg>
<span class="t" style="left:208.30px;top:741.45px;font-size:15.30px;color:#262626;font-weight:normal;">Textured P…</span>
<div class="r" style="left:184.10px;top:767.40px;width:119.70px;height:25.50px;border:1px solid #dedede"></div>
<svg class="r" style="left:190.00px;top:776.40px;" width="12" height="8" viewBox="0 0 12 8"><path d="M1.5 2 L6 5.8 L10.5 2" fill="none" stroke="#a0a0a0" stroke-width="1"/></svg>
<span class="t" style="left:208.30px;top:771.65px;font-size:15.30px;color:#262626;font-weight:normal;">By layer</span>
<div class="r" style="left:184.10px;top:827.20px;width:119.70px;height:25.50px;border:1px solid #dedede"></div>
<svg class="r" style="left:190.00px;top:836.20px;" width="12" height="8" viewBox="0 0 12 8"><path d="M1.5 2 L6 5.8 L10.5 2" fill="none" stroke="#a0a0a0" stroke-width="1"/></svg>
<span class="t" style="left:208.30px;top:831.45px;font-size:15.30px;color:#262626;font-weight:normal;">Auto</span>
<div class="r" style="left:184.10px;top:866.10px;width:119.70px;height:25.50px;border:1px solid #dedede"></div>
<svg class="r" style="left:190.00px;top:875.10px;" width="12" height="8" viewBox="0 0 12 8"><path d="M1.5 2 L6 5.8 L10.5 2" fill="none" stroke="#a0a0a0" stroke-width="1"/></svg>
<span class="t" style="left:208.30px;top:870.35px;font-size:15.30px;color:#262626;font-weight:normal;">Auto</span>
<div class="r" style="left:185.40px;top:802.30px;width:15.30px;height:15.30px;border:1px solid #8a8a8a;border-radius:1px"></div></body></html>
